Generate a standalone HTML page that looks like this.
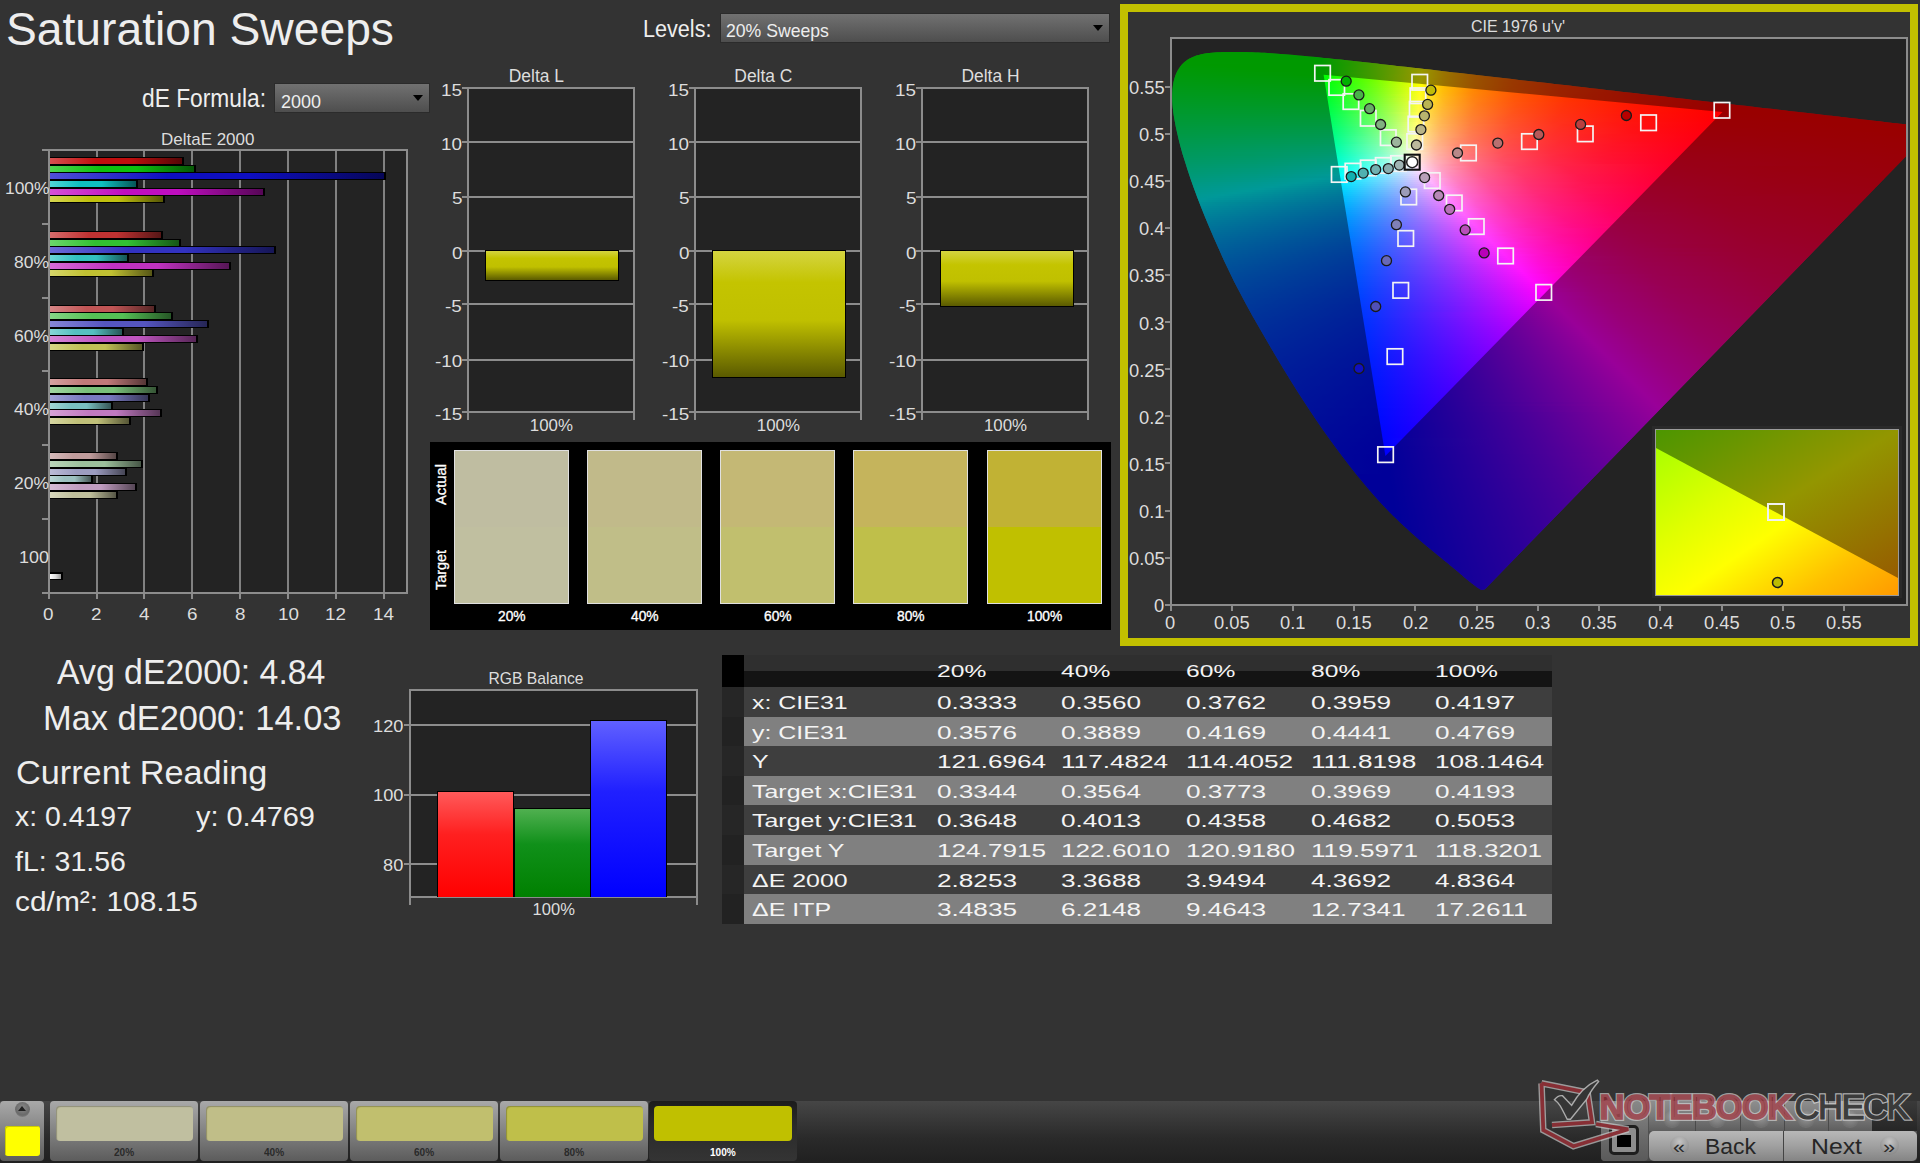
<!DOCTYPE html><html><head><meta charset="utf-8"><style>
*{margin:0;padding:0}
html,body{width:1920px;height:1163px;overflow:hidden;background:#333}
body{position:relative;font-family:"Liberation Sans",sans-serif}
div,i,b,span{position:absolute;display:block}
.t{white-space:pre;transform-origin:0 0}
#gam i{left:0;width:100%}
</style></head><body><div class="t" style="left:5.50px;top:6.80px;font-size:45.35px;line-height:45.35px;color:#eee;transform:scaleX(1.0193);">Saturation Sweeps</div>
<div class="t" style="left:141.60px;top:86.16px;font-size:25.44px;line-height:25.44px;color:#eee;transform:scaleX(0.8951);">dE Formula:</div>
<div style="left:275px;top:84px;width:154px;height:28px;background:linear-gradient(#717171,#4e4e4e);box-shadow:0 0 0 1px #2b2b2b"></div>
<div class="t" style="left:280.60px;top:92.18px;font-size:19.04px;line-height:19.04px;color:#eee;transform:scaleX(0.9443);">2000</div>
<div style="left:413px;top:95px;width:0;height:0;border-left:5px solid transparent;border-right:5px solid transparent;border-top:6px solid #000"></div>
<div class="t" style="left:642.50px;top:17.19px;font-size:23.98px;line-height:23.98px;color:#eee;transform:scaleX(0.9014);">Levels:</div>
<div style="left:721px;top:14px;width:388px;height:28px;background:linear-gradient(#717171,#4e4e4e);box-shadow:0 0 0 1px #2b2b2b"></div>
<div class="t" style="left:726.00px;top:21.38px;font-size:19.04px;line-height:19.04px;color:#eee;transform:scaleX(0.9267);">20% Sweeps</div>
<div style="left:1093px;top:25px;width:0;height:0;border-left:5px solid transparent;border-right:5px solid transparent;border-top:6px solid #000"></div>
<div class="t" style="left:160.85px;top:130.78px;font-size:17.15px;line-height:17.15px;color:#ddd;transform:scaleX(0.9905);">DeltaE 2000</div>
<div style="left:49px;top:150px;width:358px;height:443px;background:#232323"></div>
<div style="left:96px;top:150px;width:2px;height:443px;background:#8c8c8c;opacity:.9"></div>
<div style="left:143px;top:150px;width:2px;height:443px;background:#8c8c8c;opacity:.9"></div>
<div style="left:191px;top:150px;width:2px;height:443px;background:#8c8c8c;opacity:.9"></div>
<div style="left:239px;top:150px;width:2px;height:443px;background:#8c8c8c;opacity:.9"></div>
<div style="left:287px;top:150px;width:2px;height:443px;background:#8c8c8c;opacity:.9"></div>
<div style="left:335px;top:150px;width:2px;height:443px;background:#8c8c8c;opacity:.9"></div>
<div style="left:383px;top:150px;width:2px;height:443px;background:#8c8c8c;opacity:.9"></div>
<div style="left:48px;top:149px;width:360px;height:2px;background:#8c8c8c"></div>
<div style="left:406px;top:149px;width:2px;height:445px;background:#8c8c8c"></div>
<div style="left:48px;top:149px;width:2px;height:445px;background:#8c8c8c"></div>
<div style="left:48px;top:592px;width:360px;height:2px;background:#8c8c8c"></div>
<div style="left:42px;top:149px;width:7px;height:2px;background:#8c8c8c"></div>
<div style="left:42px;top:223px;width:7px;height:2px;background:#8c8c8c"></div>
<div style="left:42px;top:297px;width:7px;height:2px;background:#8c8c8c"></div>
<div style="left:42px;top:370px;width:7px;height:2px;background:#8c8c8c"></div>
<div style="left:42px;top:444px;width:7px;height:2px;background:#8c8c8c"></div>
<div style="left:42px;top:518px;width:7px;height:2px;background:#8c8c8c"></div>
<div style="left:42px;top:592px;width:7px;height:2px;background:#8c8c8c"></div>
<div style="left:48px;top:593px;width:2px;height:6px;background:#8c8c8c"></div>
<div class="t" style="left:43.45px;top:605.68px;font-size:17.15px;line-height:17.15px;color:#ddd;transform:scaleX(1.1000);">0</div>
<div style="left:96px;top:593px;width:2px;height:6px;background:#8c8c8c"></div>
<div class="t" style="left:91.31px;top:605.68px;font-size:17.15px;line-height:17.15px;color:#ddd;transform:scaleX(1.1000);">2</div>
<div style="left:143px;top:593px;width:2px;height:6px;background:#8c8c8c"></div>
<div class="t" style="left:139.17px;top:605.68px;font-size:17.15px;line-height:17.15px;color:#ddd;transform:scaleX(1.1000);">4</div>
<div style="left:191px;top:593px;width:2px;height:6px;background:#8c8c8c"></div>
<div class="t" style="left:187.03px;top:605.68px;font-size:17.15px;line-height:17.15px;color:#ddd;transform:scaleX(1.1000);">6</div>
<div style="left:239px;top:593px;width:2px;height:6px;background:#8c8c8c"></div>
<div class="t" style="left:234.89px;top:605.68px;font-size:17.15px;line-height:17.15px;color:#ddd;transform:scaleX(1.1000);">8</div>
<div style="left:287px;top:593px;width:2px;height:6px;background:#8c8c8c"></div>
<div class="t" style="left:277.51px;top:605.68px;font-size:17.15px;line-height:17.15px;color:#ddd;transform:scaleX(1.1000);">10</div>
<div style="left:335px;top:593px;width:2px;height:6px;background:#8c8c8c"></div>
<div class="t" style="left:325.37px;top:605.68px;font-size:17.15px;line-height:17.15px;color:#ddd;transform:scaleX(1.1000);">12</div>
<div style="left:383px;top:593px;width:2px;height:6px;background:#8c8c8c"></div>
<div class="t" style="left:373.23px;top:605.68px;font-size:17.15px;line-height:17.15px;color:#ddd;transform:scaleX(1.1000);">14</div>
<div class="t" style="left:4.50px;top:179.88px;font-size:17.15px;line-height:17.15px;color:#ddd;transform:scaleX(1.0144);">100%</div>
<div class="t" style="left:14.00px;top:253.71px;font-size:17.15px;line-height:17.15px;color:#ddd;transform:scaleX(1.0196);">80%</div>
<div class="t" style="left:14.00px;top:327.54px;font-size:17.15px;line-height:17.15px;color:#ddd;transform:scaleX(1.0196);">60%</div>
<div class="t" style="left:14.00px;top:401.37px;font-size:17.15px;line-height:17.15px;color:#ddd;transform:scaleX(1.0196);">40%</div>
<div class="t" style="left:14.00px;top:475.20px;font-size:17.15px;line-height:17.15px;color:#ddd;transform:scaleX(1.0196);">20%</div>
<div class="t" style="left:19.00px;top:549.03px;font-size:17.15px;line-height:17.15px;color:#ddd;transform:scaleX(1.0483);">100</div>
<div style="left:50px;top:157px;width:134px;height:8px;background:#000"></div>
<div style="left:50px;top:158px;width:132px;height:6px;background:linear-gradient(90deg,rgb(214,80,80),rgb(192,14,14) 35%,rgb(192,14,14) 60%,rgb(86,6,6))"></div>
<div style="left:50px;top:165px;width:146px;height:8px;background:#000"></div>
<div style="left:50px;top:166px;width:144px;height:6px;background:linear-gradient(90deg,rgb(80,214,80),rgb(14,192,14) 35%,rgb(14,192,14) 60%,rgb(6,86,6))"></div>
<div style="left:50px;top:172px;width:336px;height:8px;background:#000"></div>
<div style="left:50px;top:173px;width:334px;height:6px;background:linear-gradient(90deg,rgb(80,80,214),rgb(14,14,192) 35%,rgb(14,14,192) 60%,rgb(6,6,86))"></div>
<div style="left:50px;top:180px;width:88px;height:8px;background:#000"></div>
<div style="left:50px;top:181px;width:86px;height:6px;background:linear-gradient(90deg,rgb(80,214,214),rgb(14,192,192) 35%,rgb(14,192,192) 60%,rgb(6,86,86))"></div>
<div style="left:50px;top:188px;width:215px;height:8px;background:#000"></div>
<div style="left:50px;top:189px;width:213px;height:6px;background:linear-gradient(90deg,rgb(214,80,214),rgb(192,14,192) 35%,rgb(192,14,192) 60%,rgb(86,6,86))"></div>
<div style="left:50px;top:195px;width:115px;height:8px;background:#000"></div>
<div style="left:50px;top:196px;width:113px;height:6px;background:linear-gradient(90deg,rgb(214,214,80),rgb(192,192,14) 35%,rgb(192,192,14) 60%,rgb(86,86,6))"></div>
<div style="left:50px;top:231px;width:113px;height:8px;background:#000"></div>
<div style="left:50px;top:232px;width:111px;height:6px;background:linear-gradient(90deg,rgb(214,107,107),rgb(192,50,50) 35%,rgb(192,50,50) 60%,rgb(86,22,22))"></div>
<div style="left:50px;top:239px;width:131px;height:8px;background:#000"></div>
<div style="left:50px;top:240px;width:129px;height:6px;background:linear-gradient(90deg,rgb(107,214,107),rgb(50,192,50) 35%,rgb(50,192,50) 60%,rgb(22,86,22))"></div>
<div style="left:50px;top:246px;width:226px;height:8px;background:#000"></div>
<div style="left:50px;top:247px;width:224px;height:6px;background:linear-gradient(90deg,rgb(107,107,214),rgb(50,50,192) 35%,rgb(50,50,192) 60%,rgb(22,22,86))"></div>
<div style="left:50px;top:254px;width:79px;height:8px;background:#000"></div>
<div style="left:50px;top:255px;width:77px;height:6px;background:linear-gradient(90deg,rgb(107,214,214),rgb(50,192,192) 35%,rgb(50,192,192) 60%,rgb(22,86,86))"></div>
<div style="left:50px;top:262px;width:181px;height:8px;background:#000"></div>
<div style="left:50px;top:263px;width:179px;height:6px;background:linear-gradient(90deg,rgb(214,107,214),rgb(192,50,192) 35%,rgb(192,50,192) 60%,rgb(86,22,86))"></div>
<div style="left:50px;top:269px;width:104px;height:8px;background:#000"></div>
<div style="left:50px;top:270px;width:102px;height:6px;background:linear-gradient(90deg,rgb(214,214,107),rgb(192,192,50) 35%,rgb(192,192,50) 60%,rgb(86,86,22))"></div>
<div style="left:50px;top:305px;width:106px;height:8px;background:#000"></div>
<div style="left:50px;top:306px;width:104px;height:6px;background:linear-gradient(90deg,rgb(214,134,134),rgb(192,85,85) 35%,rgb(192,85,85) 60%,rgb(86,38,38))"></div>
<div style="left:50px;top:312px;width:123px;height:8px;background:#000"></div>
<div style="left:50px;top:313px;width:121px;height:6px;background:linear-gradient(90deg,rgb(134,214,134),rgb(85,192,85) 35%,rgb(85,192,85) 60%,rgb(38,86,38))"></div>
<div style="left:50px;top:320px;width:159px;height:8px;background:#000"></div>
<div style="left:50px;top:321px;width:157px;height:6px;background:linear-gradient(90deg,rgb(134,134,214),rgb(85,85,192) 35%,rgb(85,85,192) 60%,rgb(38,38,86))"></div>
<div style="left:50px;top:328px;width:74px;height:8px;background:#000"></div>
<div style="left:50px;top:329px;width:72px;height:6px;background:linear-gradient(90deg,rgb(134,214,214),rgb(85,192,192) 35%,rgb(85,192,192) 60%,rgb(38,86,86))"></div>
<div style="left:50px;top:335px;width:148px;height:8px;background:#000"></div>
<div style="left:50px;top:336px;width:146px;height:6px;background:linear-gradient(90deg,rgb(214,134,214),rgb(192,85,192) 35%,rgb(192,85,192) 60%,rgb(86,38,86))"></div>
<div style="left:50px;top:343px;width:94px;height:8px;background:#000"></div>
<div style="left:50px;top:344px;width:92px;height:6px;background:linear-gradient(90deg,rgb(214,214,134),rgb(192,192,85) 35%,rgb(192,192,85) 60%,rgb(86,86,38))"></div>
<div style="left:50px;top:378px;width:98px;height:8px;background:#000"></div>
<div style="left:50px;top:379px;width:96px;height:6px;background:linear-gradient(90deg,rgb(214,161,161),rgb(192,121,121) 35%,rgb(192,121,121) 60%,rgb(86,54,54))"></div>
<div style="left:50px;top:386px;width:108px;height:8px;background:#000"></div>
<div style="left:50px;top:387px;width:106px;height:6px;background:linear-gradient(90deg,rgb(161,214,161),rgb(121,192,121) 35%,rgb(121,192,121) 60%,rgb(54,86,54))"></div>
<div style="left:50px;top:394px;width:100px;height:8px;background:#000"></div>
<div style="left:50px;top:395px;width:98px;height:6px;background:linear-gradient(90deg,rgb(161,161,214),rgb(121,121,192) 35%,rgb(121,121,192) 60%,rgb(54,54,86))"></div>
<div style="left:50px;top:402px;width:63px;height:8px;background:#000"></div>
<div style="left:50px;top:403px;width:61px;height:6px;background:linear-gradient(90deg,rgb(161,214,214),rgb(121,192,192) 35%,rgb(121,192,192) 60%,rgb(54,86,86))"></div>
<div style="left:50px;top:409px;width:112px;height:8px;background:#000"></div>
<div style="left:50px;top:410px;width:110px;height:6px;background:linear-gradient(90deg,rgb(214,161,214),rgb(192,121,192) 35%,rgb(192,121,192) 60%,rgb(86,54,86))"></div>
<div style="left:50px;top:417px;width:81px;height:8px;background:#000"></div>
<div style="left:50px;top:418px;width:79px;height:6px;background:linear-gradient(90deg,rgb(214,214,161),rgb(192,192,121) 35%,rgb(192,192,121) 60%,rgb(86,86,54))"></div>
<div style="left:50px;top:452px;width:68px;height:8px;background:#000"></div>
<div style="left:50px;top:453px;width:66px;height:6px;background:linear-gradient(90deg,rgb(214,187,187),rgb(192,156,156) 35%,rgb(192,156,156) 60%,rgb(86,70,70))"></div>
<div style="left:50px;top:460px;width:93px;height:8px;background:#000"></div>
<div style="left:50px;top:461px;width:91px;height:6px;background:linear-gradient(90deg,rgb(187,214,187),rgb(156,192,156) 35%,rgb(156,192,156) 60%,rgb(70,86,70))"></div>
<div style="left:50px;top:468px;width:77px;height:8px;background:#000"></div>
<div style="left:50px;top:469px;width:75px;height:6px;background:linear-gradient(90deg,rgb(187,187,214),rgb(156,156,192) 35%,rgb(156,156,192) 60%,rgb(70,70,86))"></div>
<div style="left:50px;top:475px;width:43px;height:8px;background:#000"></div>
<div style="left:50px;top:476px;width:41px;height:6px;background:linear-gradient(90deg,rgb(187,214,214),rgb(156,192,192) 35%,rgb(156,192,192) 60%,rgb(70,86,86))"></div>
<div style="left:50px;top:483px;width:87px;height:8px;background:#000"></div>
<div style="left:50px;top:484px;width:85px;height:6px;background:linear-gradient(90deg,rgb(214,187,214),rgb(192,156,192) 35%,rgb(192,156,192) 60%,rgb(86,70,86))"></div>
<div style="left:50px;top:491px;width:68px;height:8px;background:#000"></div>
<div style="left:50px;top:492px;width:66px;height:6px;background:linear-gradient(90deg,rgb(214,214,187),rgb(192,192,156) 35%,rgb(192,192,156) 60%,rgb(86,86,70))"></div>
<div style="left:50px;top:572px;width:13px;height:8px;background:#000"></div>
<div style="left:50px;top:573.5px;width:11px;height:5px;background:linear-gradient(90deg,#fff,#ddd 50%,#999)"></div>
<div class="t" style="left:508.77px;top:68.23px;font-size:17.44px;line-height:17.44px;color:#ddd;">Delta L</div>
<div style="left:468px;top:88px;width:166px;height:324px;background:#232323"></div>
<div style="left:468px;top:87px;width:167px;height:2px;background:#8c8c8c"></div>
<div style="left:462px;top:87px;width:6px;height:2px;background:#8c8c8c"></div>
<div class="t" style="left:441.11px;top:81.88px;font-size:17.15px;line-height:17.15px;color:#ddd;transform:scaleX(1.1000);">15</div>
<div style="left:468px;top:141px;width:167px;height:2px;background:#8c8c8c"></div>
<div style="left:462px;top:141px;width:6px;height:2px;background:#8c8c8c"></div>
<div class="t" style="left:441.11px;top:135.58px;font-size:17.15px;line-height:17.15px;color:#ddd;transform:scaleX(1.1000);">10</div>
<div style="left:468px;top:196px;width:167px;height:2px;background:#8c8c8c"></div>
<div style="left:462px;top:196px;width:6px;height:2px;background:#8c8c8c"></div>
<div class="t" style="left:451.61px;top:190.38px;font-size:17.15px;line-height:17.15px;color:#ddd;transform:scaleX(1.1000);">5</div>
<div style="left:468px;top:250px;width:167px;height:2px;background:#8c8c8c"></div>
<div style="left:462px;top:250px;width:6px;height:2px;background:#8c8c8c"></div>
<div class="t" style="left:451.61px;top:244.58px;font-size:17.15px;line-height:17.15px;color:#ddd;transform:scaleX(1.1000);">0</div>
<div style="left:468px;top:303px;width:167px;height:2px;background:#8c8c8c"></div>
<div style="left:462px;top:303px;width:6px;height:2px;background:#8c8c8c"></div>
<div class="t" style="left:445.32px;top:297.78px;font-size:17.15px;line-height:17.15px;color:#ddd;transform:scaleX(1.1000);">-5</div>
<div style="left:468px;top:359px;width:167px;height:2px;background:#8c8c8c"></div>
<div style="left:462px;top:359px;width:6px;height:2px;background:#8c8c8c"></div>
<div class="t" style="left:434.83px;top:353.28px;font-size:17.15px;line-height:17.15px;color:#ddd;transform:scaleX(1.1000);">-10</div>
<div style="left:468px;top:411px;width:167px;height:2px;background:#8c8c8c"></div>
<div style="left:462px;top:411px;width:6px;height:2px;background:#8c8c8c"></div>
<div class="t" style="left:434.83px;top:405.68px;font-size:17.15px;line-height:17.15px;color:#ddd;transform:scaleX(1.1000);">-15</div>
<div style="left:467px;top:88px;width:2px;height:332px;background:#8c8c8c"></div>
<div style="left:633px;top:88px;width:2px;height:332px;background:#8c8c8c"></div>
<div class="t" style="left:529.84px;top:418.22px;font-size:16.86px;line-height:16.86px;color:#ddd;">100%</div>
<div style="left:485px;top:250px;width:134px;height:31px;background:#000"></div>
<div style="left:486px;top:251px;width:132px;height:29px;background:linear-gradient(#d4d440,#c4c400 25%,#c0c000 55%,#5a5a00)"></div>
<div class="t" style="left:734.32px;top:68.23px;font-size:17.44px;line-height:17.44px;color:#ddd;">Delta C</div>
<div style="left:695px;top:88px;width:166px;height:324px;background:#232323"></div>
<div style="left:695px;top:87px;width:167px;height:2px;background:#8c8c8c"></div>
<div style="left:689px;top:87px;width:6px;height:2px;background:#8c8c8c"></div>
<div class="t" style="left:668.11px;top:81.88px;font-size:17.15px;line-height:17.15px;color:#ddd;transform:scaleX(1.1000);">15</div>
<div style="left:695px;top:141px;width:167px;height:2px;background:#8c8c8c"></div>
<div style="left:689px;top:141px;width:6px;height:2px;background:#8c8c8c"></div>
<div class="t" style="left:668.11px;top:135.58px;font-size:17.15px;line-height:17.15px;color:#ddd;transform:scaleX(1.1000);">10</div>
<div style="left:695px;top:196px;width:167px;height:2px;background:#8c8c8c"></div>
<div style="left:689px;top:196px;width:6px;height:2px;background:#8c8c8c"></div>
<div class="t" style="left:678.61px;top:190.38px;font-size:17.15px;line-height:17.15px;color:#ddd;transform:scaleX(1.1000);">5</div>
<div style="left:695px;top:250px;width:167px;height:2px;background:#8c8c8c"></div>
<div style="left:689px;top:250px;width:6px;height:2px;background:#8c8c8c"></div>
<div class="t" style="left:678.61px;top:244.58px;font-size:17.15px;line-height:17.15px;color:#ddd;transform:scaleX(1.1000);">0</div>
<div style="left:695px;top:303px;width:167px;height:2px;background:#8c8c8c"></div>
<div style="left:689px;top:303px;width:6px;height:2px;background:#8c8c8c"></div>
<div class="t" style="left:672.32px;top:297.78px;font-size:17.15px;line-height:17.15px;color:#ddd;transform:scaleX(1.1000);">-5</div>
<div style="left:695px;top:359px;width:167px;height:2px;background:#8c8c8c"></div>
<div style="left:689px;top:359px;width:6px;height:2px;background:#8c8c8c"></div>
<div class="t" style="left:661.83px;top:353.28px;font-size:17.15px;line-height:17.15px;color:#ddd;transform:scaleX(1.1000);">-10</div>
<div style="left:695px;top:411px;width:167px;height:2px;background:#8c8c8c"></div>
<div style="left:689px;top:411px;width:6px;height:2px;background:#8c8c8c"></div>
<div class="t" style="left:661.83px;top:405.68px;font-size:17.15px;line-height:17.15px;color:#ddd;transform:scaleX(1.1000);">-15</div>
<div style="left:694px;top:88px;width:2px;height:332px;background:#8c8c8c"></div>
<div style="left:860px;top:88px;width:2px;height:332px;background:#8c8c8c"></div>
<div class="t" style="left:756.84px;top:418.22px;font-size:16.86px;line-height:16.86px;color:#ddd;">100%</div>
<div style="left:712px;top:250px;width:134px;height:128px;background:#000"></div>
<div style="left:713px;top:251px;width:132px;height:126px;background:linear-gradient(#d4d440,#c4c400 25%,#c0c000 55%,#5a5a00)"></div>
<div class="t" style="left:961.42px;top:68.23px;font-size:17.44px;line-height:17.44px;color:#ddd;">Delta H</div>
<div style="left:922px;top:88px;width:166px;height:324px;background:#232323"></div>
<div style="left:922px;top:87px;width:167px;height:2px;background:#8c8c8c"></div>
<div style="left:916px;top:87px;width:6px;height:2px;background:#8c8c8c"></div>
<div class="t" style="left:895.21px;top:81.88px;font-size:17.15px;line-height:17.15px;color:#ddd;transform:scaleX(1.1000);">15</div>
<div style="left:922px;top:141px;width:167px;height:2px;background:#8c8c8c"></div>
<div style="left:916px;top:141px;width:6px;height:2px;background:#8c8c8c"></div>
<div class="t" style="left:895.21px;top:135.58px;font-size:17.15px;line-height:17.15px;color:#ddd;transform:scaleX(1.1000);">10</div>
<div style="left:922px;top:196px;width:167px;height:2px;background:#8c8c8c"></div>
<div style="left:916px;top:196px;width:6px;height:2px;background:#8c8c8c"></div>
<div class="t" style="left:905.71px;top:190.38px;font-size:17.15px;line-height:17.15px;color:#ddd;transform:scaleX(1.1000);">5</div>
<div style="left:922px;top:250px;width:167px;height:2px;background:#8c8c8c"></div>
<div style="left:916px;top:250px;width:6px;height:2px;background:#8c8c8c"></div>
<div class="t" style="left:905.71px;top:244.58px;font-size:17.15px;line-height:17.15px;color:#ddd;transform:scaleX(1.1000);">0</div>
<div style="left:922px;top:303px;width:167px;height:2px;background:#8c8c8c"></div>
<div style="left:916px;top:303px;width:6px;height:2px;background:#8c8c8c"></div>
<div class="t" style="left:899.42px;top:297.78px;font-size:17.15px;line-height:17.15px;color:#ddd;transform:scaleX(1.1000);">-5</div>
<div style="left:922px;top:359px;width:167px;height:2px;background:#8c8c8c"></div>
<div style="left:916px;top:359px;width:6px;height:2px;background:#8c8c8c"></div>
<div class="t" style="left:888.93px;top:353.28px;font-size:17.15px;line-height:17.15px;color:#ddd;transform:scaleX(1.1000);">-10</div>
<div style="left:922px;top:411px;width:167px;height:2px;background:#8c8c8c"></div>
<div style="left:916px;top:411px;width:6px;height:2px;background:#8c8c8c"></div>
<div class="t" style="left:888.93px;top:405.68px;font-size:17.15px;line-height:17.15px;color:#ddd;transform:scaleX(1.1000);">-15</div>
<div style="left:921px;top:88px;width:2px;height:332px;background:#8c8c8c"></div>
<div style="left:1087px;top:88px;width:2px;height:332px;background:#8c8c8c"></div>
<div class="t" style="left:983.94px;top:418.22px;font-size:16.86px;line-height:16.86px;color:#ddd;">100%</div>
<div style="left:940px;top:250px;width:134px;height:57px;background:#000"></div>
<div style="left:941px;top:251px;width:132px;height:55px;background:linear-gradient(#d4d440,#c4c400 25%,#c0c000 55%,#5a5a00)"></div>
<div style="left:430px;top:442px;width:681px;height:188px;background:#000"></div>
<div style="left:454px;top:450px;width:115px;height:154px;box-sizing:border-box;border:1px solid #e0e0e0;background:linear-gradient(rgb(191, 189, 161) 50%,rgb(192, 191, 160) 50%)"></div>
<div class="t" style="left:497.68px;top:609.49px;font-size:14.53px;line-height:14.53px;color:#fff;transform:scaleX(0.9500);-webkit-text-stroke:0.35px #fff;">20%</div>
<div style="left:587px;top:450px;width:115px;height:154px;box-sizing:border-box;border:1px solid #e0e0e0;background:linear-gradient(rgb(193, 186, 138) 50%,rgb(192, 190, 136) 50%)"></div>
<div class="t" style="left:630.68px;top:609.49px;font-size:14.53px;line-height:14.53px;color:#fff;transform:scaleX(0.9500);-webkit-text-stroke:0.35px #fff;">40%</div>
<div style="left:720px;top:450px;width:115px;height:154px;box-sizing:border-box;border:1px solid #e0e0e0;background:linear-gradient(rgb(196, 184, 117) 50%,rgb(193, 191, 110) 50%)"></div>
<div class="t" style="left:763.68px;top:609.49px;font-size:14.53px;line-height:14.53px;color:#fff;transform:scaleX(0.9500);-webkit-text-stroke:0.35px #fff;">60%</div>
<div style="left:853px;top:450px;width:115px;height:154px;box-sizing:border-box;border:1px solid #e0e0e0;background:linear-gradient(rgb(197, 180, 92) 50%,rgb(191, 191, 74) 50%)"></div>
<div class="t" style="left:896.68px;top:609.49px;font-size:14.53px;line-height:14.53px;color:#fff;transform:scaleX(0.9500);-webkit-text-stroke:0.35px #fff;">80%</div>
<div style="left:987px;top:450px;width:115px;height:154px;box-sizing:border-box;border:1px solid #e0e0e0;background:linear-gradient(rgb(193, 178, 52) 50%,rgb(192, 192, 0) 50%)"></div>
<div class="t" style="left:1026.84px;top:609.49px;font-size:14.53px;line-height:14.53px;color:#fff;transform:scaleX(0.9500);-webkit-text-stroke:0.35px #fff;">100%</div>
<div class="t" style="left:433.95px;top:505.00px;font-size:14.83px;line-height:14.83px;color:#fff;transform:rotate(-90deg) scaleX(0.9950);-webkit-text-stroke:0.3px #fff">Actual</div>
<div class="t" style="left:433.95px;top:590.00px;font-size:14.83px;line-height:14.83px;color:#fff;transform:rotate(-90deg) scaleX(0.9707);-webkit-text-stroke:0.3px #fff">Target</div>
<div style="left:1120px;top:4px;width:798px;height:642px;box-sizing:border-box;border:8px solid #c2c000"></div>
<div class="t" style="left:1470.95px;top:18.96px;font-size:15.99px;line-height:15.99px;color:#ddd;">CIE 1976 u'v'</div>
<div style="left:1170px;top:37px;width:737px;height:568px;background:#232323"></div>
<div id="gam" style="left:1171px;top:38px;width:735px;height:566px;overflow:hidden;clip-path:polygon(314.0px 551.2px,314.0px 551.2px,314.0px 551.2px,313.9px 551.1px,313.9px 551.1px,313.8px 551.1px,313.8px 551.2px,313.8px 551.2px,313.7px 551.3px,313.7px 551.3px,313.6px 551.4px,313.6px 551.4px,313.5px 551.5px,313.5px 551.5px,313.4px 551.5px,313.3px 551.5px,313.3px 551.5px,313.2px 551.5px,313.1px 551.5px,313.1px 551.5px,313.0px 551.6px,312.9px 551.6px,312.8px 551.7px,312.7px 551.7px,312.7px 551.8px,312.6px 551.8px,312.5px 551.8px,312.4px 551.8px,312.3px 551.8px,312.2px 551.8px,312.0px 551.8px,311.9px 551.8px,311.8px 551.8px,311.7px 551.8px,311.5px 551.8px,311.4px 551.8px,311.2px 551.8px,311.1px 551.8px,310.9px 551.8px,310.8px 551.9px,310.6px 551.9px,310.4px 551.9px,310.2px 551.8px,310.0px 551.7px,309.7px 551.6px,309.4px 551.5px,309.1px 551.3px,308.8px 551.1px,308.4px 550.9px,307.9px 550.6px,307.5px 550.3px,306.9px 550.0px,306.4px 549.6px,305.8px 549.2px,305.2px 548.8px,304.6px 548.3px,303.9px 547.8px,303.3px 547.3px,302.5px 546.8px,301.8px 546.1px,300.9px 545.5px,300.0px 544.8px,299.1px 544.0px,298.0px 543.2px,297.0px 542.3px,295.9px 541.4px,294.7px 540.5px,293.5px 539.5px,292.3px 538.4px,291.1px 537.3px,289.7px 536.2px,288.4px 535.0px,286.9px 533.8px,285.4px 532.6px,283.9px 531.3px,282.3px 530.0px,280.6px 528.6px,278.9px 527.2px,277.1px 525.6px,275.1px 524.0px,273.1px 522.4px,270.9px 520.6px,268.7px 518.8px,266.5px 517.0px,264.1px 515.0px,261.7px 513.0px,259.2px 511.0px,256.7px 508.9px,254.1px 506.7px,251.4px 504.4px,248.5px 502.0px,245.6px 499.4px,242.6px 496.8px,239.4px 494.0px,236.2px 491.1px,232.9px 488.0px,229.4px 484.7px,225.9px 481.3px,222.3px 477.9px,218.6px 474.2px,214.8px 470.3px,210.7px 466.1px,206.4px 461.3px,201.8px 456.1px,197.0px 450.6px,192.0px 444.6px,186.8px 438.3px,181.4px 431.6px,176.0px 424.5px,170.3px 417.1px,164.5px 409.2px,158.5px 401.0px,152.4px 392.4px,146.2px 383.5px,140.0px 374.2px,133.6px 364.6px,127.1px 354.5px,120.5px 344.0px,113.9px 333.3px,107.4px 322.5px,100.9px 311.6px,94.5px 300.6px,88.0px 289.3px,81.5px 277.9px,75.2px 266.5px,69.1px 255.1px,63.3px 243.9px,57.9px 232.8px,52.6px 221.7px,47.6px 210.6px,42.8px 199.7px,38.2px 189.1px,34.0px 178.9px,30.0px 169.0px,26.3px 159.4px,22.8px 150.0px,19.6px 141.0px,16.7px 132.3px,14.1px 124.1px,11.7px 116.4px,9.6px 109.0px,7.8px 102.1px,6.3px 95.5px,4.9px 89.3px,3.8px 83.4px,2.8px 77.8px,2.1px 72.7px,1.6px 67.9px,1.3px 63.4px,1.2px 59.1px,1.3px 55.0px,1.5px 51.2px,1.9px 47.6px,2.5px 44.3px,3.2px 41.2px,4.1px 38.3px,5.2px 35.5px,6.4px 33.0px,7.8px 30.7px,9.3px 28.5px,10.9px 26.6px,12.7px 24.8px,14.5px 23.2px,16.5px 21.7px,18.6px 20.5px,20.8px 19.4px,23.1px 18.5px,25.4px 17.6px,27.8px 16.9px,30.3px 16.2px,32.8px 15.7px,35.5px 15.3px,38.1px 15.0px,40.9px 14.8px,43.6px 14.5px,46.4px 14.3px,49.2px 14.2px,52.1px 14.1px,55.0px 14.0px,57.9px 14.0px,60.8px 14.0px,63.7px 13.9px,66.6px 14.0px,69.5px 14.0px,72.4px 14.0px,75.3px 14.1px,78.3px 14.2px,81.3px 14.3px,84.3px 14.4px,87.3px 14.5px,90.3px 14.7px,93.4px 14.8px,96.5px 15.0px,99.7px 15.2px,102.9px 15.4px,106.2px 15.7px,109.4px 15.9px,112.8px 16.2px,116.2px 16.4px,119.6px 16.7px,123.1px 17.0px,126.6px 17.4px,130.2px 17.7px,133.8px 18.0px,137.5px 18.4px,141.3px 18.7px,145.1px 19.1px,149.0px 19.5px,152.9px 19.9px,156.9px 20.3px,161.0px 20.7px,165.1px 21.2px,169.4px 21.6px,173.7px 22.1px,178.0px 22.6px,182.5px 23.0px,187.0px 23.5px,191.6px 24.0px,196.3px 24.6px,201.0px 25.1px,205.8px 25.6px,210.8px 26.2px,215.8px 26.7px,220.9px 27.3px,226.0px 27.9px,231.3px 28.5px,236.7px 29.1px,242.1px 29.7px,247.6px 30.3px,253.2px 31.0px,258.9px 31.6px,264.7px 32.3px,270.6px 33.0px,276.6px 33.7px,282.6px 34.4px,288.8px 35.1px,295.0px 35.8px,301.3px 36.5px,307.7px 37.2px,314.2px 38.0px,320.8px 38.8px,327.5px 39.5px,334.2px 40.3px,341.0px 41.1px,347.9px 41.9px,354.9px 42.7px,362.0px 43.5px,369.1px 44.3px,376.3px 45.1px,383.5px 46.0px,390.8px 46.8px,398.2px 47.6px,405.5px 48.5px,412.9px 49.3px,420.4px 50.2px,427.9px 51.1px,435.4px 51.9px,442.9px 52.8px,450.3px 53.7px,457.6px 54.5px,464.9px 55.3px,472.1px 56.2px,479.3px 57.0px,486.5px 57.8px,493.6px 58.6px,500.8px 59.5px,507.9px 60.3px,515.1px 61.1px,522.1px 61.9px,529.1px 62.7px,535.8px 63.5px,542.5px 64.2px,549.1px 65.0px,555.5px 65.7px,561.8px 66.4px,568.0px 67.2px,574.1px 67.8px,580.0px 68.5px,585.9px 69.2px,591.6px 69.9px,597.2px 70.5px,602.6px 71.1px,607.9px 71.8px,613.0px 72.3px,618.0px 72.9px,622.9px 73.5px,627.6px 74.0px,632.2px 74.6px,636.7px 75.1px,641.0px 75.6px,645.2px 76.0px,649.2px 76.5px,653.2px 77.0px,657.0px 77.4px,660.7px 77.8px,664.2px 78.2px,667.3px 78.6px,670.4px 78.9px,673.5px 79.3px,677.0px 79.7px,681.0px 80.2px,685.9px 80.7px,691.4px 81.4px,697.2px 82.0px,703.1px 82.7px,708.6px 83.3px,713.5px 83.9px,717.9px 84.4px,721.8px 84.9px,725.5px 85.3px,728.9px 85.7px,732.0px 86.0px,734.9px 86.3px,737.6px 86.7px,739.9px 86.9px,741.9px 87.2px,743.8px 87.4px,745.7px 87.6px,747.6px 87.8px,749.7px 88.0px,751.7px 88.3px,753.7px 88.5px,755.6px 88.7px,757.3px 88.9px,758.7px 89.1px,759.8px 89.2px,760.8px 89.3px,761.5px 89.4px,762.1px 89.5px,762.6px 89.5px,763.0px 89.6px)"><i style="top:12px;height:2px;background:linear-gradient(90deg,#00ff00 0px,#01ff00 149.5px,#6fff00 200.5px,#b5ff00 227.5px,#ffff00 252.5px,#ffc700 273.5px,#ff9200 303.5px,#ff6300 345.5px,#ff4000 395.5px,#ff1c00 482.5px,#ff0500 579.5px,#ff0000 608.5px,#ff0000 735px)"></i><i style="top:14px;height:2px;background:linear-gradient(90deg,#00ff00 0px,#01ff00 149.5px,#3cff00 178.5px,#7bff00 205.5px,#fffe00 252.5px,#ffc400 274.5px,#ff9000 304.5px,#ff6600 341.5px,#ff4000 394.5px,#ff2000 468.5px,#ff0600 572.5px,#ff0000 607.5px,#ff0000 735px)"></i><i style="top:16px;height:2px;background:linear-gradient(90deg,#00ff00 0px,#00ff00 149.5px,#71ff00 201.5px,#b8ff00 228.5px,#fffd00 252.5px,#ffca00 271.5px,#ffaa00 287.5px,#ff8600 311.5px,#ff6100 346.5px,#ff3f00 395.5px,#ff1d00 476.5px,#ff0600 570.5px,#ff0000 605.5px,#ff0000 735px)"></i><i style="top:18px;height:2px;background:linear-gradient(90deg,#00ff00 0px,#00ff00 149.5px,#6cff00 199.5px,#adff00 224.5px,#fffd00 252.5px,#ffc500 273.5px,#ff8c00 306.5px,#ff6400 342.5px,#ff3f00 394.5px,#ff1c00 478.5px,#ff0400 579.5px,#ff0000 735px)"></i><i style="top:20px;height:2px;background:linear-gradient(90deg,#00ff00 0px,#01ff00 150.5px,#3dff00 179.5px,#85ff00 209.5px,#ffff00 251.5px,#ffc000 275.5px,#ff8e00 304.5px,#ff5f00 347.5px,#ff3e00 395.5px,#ff1b00 480.5px,#ff0500 572.5px,#ff0000 601.5px,#ff0000 735px)"></i><i style="top:22px;height:2px;background:linear-gradient(90deg,#00ff01 0px,#00ff00 150.5px,#78ff00 204.5px,#b3ff00 226.5px,#ffff00 251.5px,#ffc600 272.5px,#ff8c00 305.5px,#ff6100 344.5px,#ff3e00 394.5px,#ff1e00 469.5px,#ff0500 570.5px,#ff0000 599.5px,#ff0000 735px)"></i><i style="top:24px;height:2px;background:linear-gradient(90deg,#00ff03 0px,#00ff00 150.5px,#3aff00 178.5px,#7dff00 206.5px,#fffe00 251.5px,#ffc300 273.5px,#ff8a00 306.5px,#ff5d00 348.5px,#ff3e00 393.5px,#ff1c00 474.5px,#ff0300 579.5px,#ff0000 735px)"></i><i style="top:26px;height:2px;background:linear-gradient(90deg,#00ff06 0px,#00ff00 44.5px,#01ff00 151.5px,#3eff00 180.5px,#7dff00 206.5px,#fffd00 251.5px,#ffbe00 275.5px,#ff8800 307.5px,#ff5f00 345.5px,#ff3d00 394.5px,#ff1b00 476.5px,#ff0200 583.5px,#ff0000 735px)"></i><i style="top:28px;height:2px;background:linear-gradient(90deg,#00ff09 0px,#00ff00 66.5px,#00ff00 151.5px,#70ff00 201.5px,#fffd00 251.5px,#ffc400 272.5px,#ff8600 308.5px,#ff6100 342.5px,#ff3d00 393.5px,#ff1900 481.5px,#ff0200 581.5px,#ff0000 735px)"></i><i style="top:30px;height:2px;background:linear-gradient(90deg,#00ff0c 0px,#00ff00 87.5px,#00ff00 151.5px,#75ff00 203.5px,#fffc00 251.5px,#ffc100 273.5px,#ff8b00 304.5px,#ff5d00 346.5px,#ff3c00 394.5px,#ff1c00 470.5px,#ff0200 579.5px,#ff0000 735px)"></i><i style="top:32px;height:2px;background:linear-gradient(90deg,#00ff0f 0px,#00ff00 109.5px,#01ff00 152.5px,#36ff00 177.5px,#7aff00 205.5px,#aeff00 224.5px,#ffff00 250.5px,#ffbc00 275.5px,#ff8d00 302.5px,#ff5f00 343.5px,#ff3c00 393.5px,#ff1a00 475.5px,#ff0100 583.5px,#ff0000 735px)"></i><i style="top:34px;height:2px;background:linear-gradient(90deg,#00ff11 0px,#00ff00 152.5px,#7aff00 205.5px,#b4ff00 226.5px,#fffe00 250.5px,#ffc200 272.5px,#ff8b00 303.5px,#ff6200 339.5px,#ff3c00 392.5px,#ff1900 477.5px,#ff0100 581.5px,#ff0000 735px)"></i><i style="top:36px;height:2px;background:linear-gradient(90deg,#00ff14 0px,#00ff00 152.5px,#3cff00 180.5px,#7fff00 207.5px,#fffe00 250.5px,#ffbf00 273.5px,#ff8900 304.5px,#ff5c00 345.5px,#ff3b00 393.5px,#ff1c00 466.5px,#ff0100 579.5px,#ff0000 735px)"></i><i style="top:38px;height:2px;background:linear-gradient(90deg,#00ff17 0px,#01ff04 153.5px,#77ff00 204.5px,#fffd00 250.5px,#ffba00 275.5px,#ff8b00 302.5px,#ff5f00 341.5px,#ff3b00 392.5px,#ff1a00 471.5px,#ff0100 577.5px,#ff0000 735px)"></i><i style="top:40px;height:2px;background:linear-gradient(90deg,#00ff1a 0px,#00ff08 153.5px,#6fff00 201.5px,#fffc00 250.5px,#ffc200 271.5px,#ff8900 303.5px,#ff5a00 346.5px,#ff3b00 391.5px,#ff1800 476.5px,#ff0000 581.5px,#ff0000 735px)"></i><i style="top:42px;height:2px;background:linear-gradient(90deg,#00ff1d 0px,#00ff0c 153.5px,#67ff04 198.5px,#a6ff00 221.5px,#ffff00 249.5px,#ffbd00 273.5px,#ff8700 304.5px,#ff5c00 343.5px,#ff3a00 392.5px,#ff1700 478.5px,#ff0000 579.5px,#ff0000 735px)"></i><i style="top:44px;height:2px;background:linear-gradient(90deg,#00ff20 0px,#01ff0f 154.5px,#38ff0c 179.5px,#7cff07 206.5px,#bbff03 228.5px,#fffe00 249.5px,#ffba00 274.5px,#ff8900 302.5px,#ff5e00 340.5px,#ff3a00 391.5px,#ff1900 470.5px,#ff0000 577.5px,#ff0000 735px)"></i><i style="top:46px;height:2px;background:linear-gradient(90deg,#00ff23 0px,#01ff13 154.5px,#3aff10 180.5px,#84ff0b 209.5px,#fffe03 249.5px,#ffc000 271.5px,#ff8700 303.5px,#ff5a00 344.5px,#ff3a00 390.5px,#ff1800 472.5px,#ff0000 575.5px,#ff0000 735px)"></i><i style="top:48px;height:2px;background:linear-gradient(90deg,#00ff26 0px,#00ff17 154.5px,#3cff14 181.5px,#79ff10 205.5px,#fffd08 249.5px,#ffbd02 272.5px,#ff8500 304.5px,#ff5b00 342.5px,#ff3a00 389.5px,#ff1600 477.5px,#ff0000 573.5px,#ff0000 735px)"></i><i style="top:50px;height:2px;background:linear-gradient(90deg,#00ff29 0px,#01ff1b 155.5px,#79ff15 205.5px,#fffd0d 249.5px,#ffdd0a 259.5px,#ffb806 274.5px,#ff8700 302.5px,#ff5e00 338.5px,#ff3900 390.5px,#ff1900 466.5px,#ff0000 571.5px,#ff0000 735px)"></i><i style="top:52px;height:2px;background:linear-gradient(90deg,#00ff2c 0px,#01ff1f 155.5px,#3bff1c 181.5px,#76ff19 204.5px,#bcff16 228.5px,#ffff12 248.5px,#ffbe0a 271.5px,#ff8503 303.5px,#ff5900 343.5px,#ff3900 389.5px,#ff1700 471.5px,#ff0000 570.5px,#ff0000 735px)"></i><i style="top:54px;height:2px;background:linear-gradient(90deg,#00ff2f 0px,#00ff24 155.5px,#6bff1e 200.5px,#b6ff1b 226.5px,#ffff18 248.5px,#ffd612 261.5px,#ffbb0e 272.5px,#ff8a07 299.5px,#ff5b01 340.5px,#ff3900 388.5px,#ff1b00 457.5px,#ff0000 568.5px,#ff0000 735px)"></i><i style="top:56px;height:2px;background:linear-gradient(90deg,#00ff32 0px,#01ff28 156.5px,#3fff25 183.5px,#7eff22 207.5px,#fffe1d 248.5px,#ffd817 260.5px,#ffb812 273.5px,#ff850a 302.5px,#ff5603 345.5px,#ff3200 400.5px,#ff1800 465.5px,#ff0000 566.5px,#ff0000 735px)"></i><i style="top:58px;height:2px;background:linear-gradient(90deg,#00ff35 0px,#01ff2c 156.5px,#70ff28 202.5px,#aaff25 222.5px,#fffd22 248.5px,#ffbe17 270.5px,#ff830d 303.5px,#ff5806 342.5px,#ff3200 399.5px,#ff1600 470.5px,#ff0000 564.5px,#ff0000 735px)"></i><i style="top:60px;height:2px;background:linear-gradient(90deg,#00ff38 0px,#00ff30 156.5px,#32ff2e 178.5px,#7bff2c 206.5px,#fffd27 248.5px,#ffbb1b 271.5px,#ff8511 301.5px,#ff5a09 339.5px,#ff3301 396.5px,#ff1500 472.5px,#ff0000 562.5px,#ff0000 735px)"></i><i style="top:62px;height:2px;background:linear-gradient(90deg,#00ff3b 0px,#01ff34 157.5px,#78ff31 205.5px,#fffc2d 248.5px,#ffb81f 272.5px,#ff8314 302.5px,#ff550a 344.5px,#ff3303 395.5px,#ff1700 464.5px,#ff0000 560.5px,#ff0000 735px)"></i><i style="top:64px;height:2px;background:linear-gradient(90deg,#00ff3e 0px,#01ff39 157.5px,#31ff37 178.5px,#78ff36 205.5px,#b7ff34 226.5px,#ffff33 247.5px,#ffd82a 259.5px,#ffb322 274.5px,#ff7e16 305.5px,#ff570e 341.5px,#ff3306 394.5px,#ff1500 469.5px,#ff0000 558.5px,#ff0000 735px)"></i><i style="top:66px;height:2px;background:linear-gradient(90deg,#00ff41 0px,#00ff3d 157.5px,#75ff3b 204.5px,#c1ff39 229.5px,#fffe38 247.5px,#ffcf2d 262.5px,#ffb026 275.5px,#ff7c19 306.5px,#ff530f 345.5px,#ff3308 393.5px,#ff1701 461.5px,#ff0000 556.5px,#ff0000 735px)"></i><i style="top:68px;height:2px;background:linear-gradient(90deg,#00ff45 0px,#00ff41 157.5px,#2bff41 176.5px,#72ff40 203.5px,#beff3f 228.5px,#fffe3e 247.5px,#ffd132 261.5px,#ffb82c 271.5px,#ff7e1d 304.5px,#ff5412 343.5px,#ff330a 392.5px,#ff1502 466.5px,#ff0000 554.5px,#ff0000 735px)"></i><i style="top:70px;height:2px;background:linear-gradient(90deg,#00ff48 0px,#01ff46 158.5px,#6fff45 202.5px,#aeff44 223.5px,#fffd43 247.5px,#ffd338 260.5px,#ffb530 272.5px,#ff8021 302.5px,#ff5616 340.5px,#ff330c 391.5px,#ff1404 468.5px,#ff0000 552.5px,#ff0000 735px)"></i><i style="top:72px;height:2px;background:linear-gradient(90deg,#00ff4b 0px,#00ff4a 158.5px,#6cff4a 201.5px,#abff4a 222.5px,#fffc49 247.5px,#ffd53e 259.5px,#ffb935 270.5px,#ff7e24 303.5px,#ff5117 345.5px,#ff330e 390.5px,#ff1606 460.5px,#ff0000 550.5px,#ff0000 735px)"></i><i style="top:74px;height:2px;background:linear-gradient(90deg,#00ff4e 0px,#00ff4f 158.5px,#36ff4f 181.5px,#7dff4f 207.5px,#ffff50 246.5px,#ffcc40 262.5px,#ffb639 271.5px,#ff8028 301.5px,#ff531a 342.5px,#ff3310 389.5px,#ff1407 465.5px,#ff0001 548.5px,#ff0000 735px)"></i><i style="top:76px;height:2px;background:linear-gradient(90deg,#00ff52 0px,#01ff54 159.5px,#77ff54 205.5px,#b2ff55 224.5px,#fffe55 246.5px,#ffce46 261.5px,#ffb53d 271.5px,#ff7e2b 302.5px,#ff541e 340.5px,#ff3313 388.5px,#ff170a 454.5px,#ff0002 546.5px,#ff0000 735px)"></i><i style="top:78px;height:2px;background:linear-gradient(90deg,#00ff55 0px,#00ff58 159.5px,#71ff5a 203.5px,#b2ff5b 224.5px,#fffe5b 246.5px,#ffd04b 260.5px,#ffb241 272.5px,#ff8030 300.5px,#ff5621 337.5px,#ff3415 385.5px,#ff140a 462.5px,#ff0003 544.5px,#ff0000 735px)"></i><i style="top:80px;height:2px;background:linear-gradient(90deg,#00ff58 0px,#00ff5d 159.5px,#6bff5f 201.5px,#afff60 223.5px,#fffd61 246.5px,#ffd251 259.5px,#ffaf45 273.5px,#ff7e33 301.5px,#ff5925 333.5px,#ff3418 384.5px,#ff120b 467.5px,#ff0005 542.5px,#ff0000 735px)"></i><i style="top:82px;height:2px;background:linear-gradient(90deg,#00ff5c 0px,#01ff62 160.5px,#65ff64 199.5px,#a2ff66 219.5px,#fffc67 246.5px,#ffd759 257.5px,#ffb54c 270.5px,#ff8037 299.5px,#ff5326 339.5px,#ff341a 383.5px,#ff140e 459.5px,#ff0006 540.5px,#ff0000 735px)"></i><i style="top:84px;height:2px;background:linear-gradient(90deg,#00ff5f 0px,#00ff67 160.5px,#5fff69 197.5px,#acff6c 222.5px,#ffff6e 245.5px,#ffcb59 261.5px,#ffb24f 271.5px,#ff7b39 302.5px,#ff552a 336.5px,#ff341d 382.5px,#ff1912 443.5px,#ff0008 538.5px,#ff0000 735px)"></i><i style="top:86px;height:2px;background:linear-gradient(90deg,#00ff62 0px,#00ff6b 160.5px,#5cff6f 196.5px,#9fff71 218.5px,#ffff74 245.5px,#ffbd59 266.5px,#ff803f 298.5px,#ff502b 341.5px,#ff2e1c 392.5px,#ff1512 453.5px,#ff0009 536.5px,#ff0000 735px)"></i><i style="top:88px;height:2px;background:linear-gradient(90deg,#00ff66 0px,#01ff71 161.5px,#3dff73 185.5px,#8fff76 213.5px,#fffe7a 245.5px,#ffde6c 254.5px,#ffb55a 269.5px,#ff7b41 301.5px,#ff512e 339.5px,#ff2e1f 391.5px,#ff1212 461.5px,#ff000a 535.5px,#ff0000 735px)"></i><i style="top:90px;height:2px;background:linear-gradient(90deg,#00ff69 0px,#00ff76 161.5px,#42ff79 187.5px,#7cff7b 207.5px,#fffd80 245.5px,#ffda70 255.5px,#ffb961 267.5px,#ff7d45 299.5px,#ff5332 336.5px,#ff2f22 388.5px,#ff1114 463.5px,#ff000c 533.5px,#ff0000 735px)"></i><i style="top:92px;height:2px;background:linear-gradient(90deg,#00ff6d 0px,#00ff7b 161.5px,#34ff7d 182.5px,#7fff81 208.5px,#fffc87 245.5px,#ffc56c 262.5px,#ffaf61 271.5px,#ff7847 302.5px,#ff4e33 341.5px,#ff2f24 387.5px,#ff1216 458.5px,#ff000d 531.5px,#ff0001 735px)"></i><i style="top:94px;height:2px;background:linear-gradient(90deg,#00ff70 0px,#01ff80 162.5px,#39ff83 184.5px,#82ff87 209.5px,#fffc8d 245.5px,#ffdf7e 253.5px,#ffb56a 268.5px,#ff7d4d 298.5px,#ff4f36 339.5px,#ff3027 384.5px,#ff1117 460.5px,#ff000f 529.5px,#ff0002 735px)"></i><i style="top:96px;height:2px;background:linear-gradient(90deg,#00ff74 0px,#00ff85 162.5px,#49ff8a 190.5px,#82ff8d 209.5px,#ffff95 244.5px,#ffde84 253.5px,#ffb26d 269.5px,#ff784f 301.5px,#ff513b 336.5px,#ff3029 383.5px,#ff171c 440.5px,#ff0010 527.5px,#ff0002 735px)"></i><i style="top:98px;height:2px;background:linear-gradient(90deg,#00ff77 0px,#00ff8a 162.5px,#6fff92 203.5px,#c6ff98 229.5px,#fffe9b 244.5px,#ffda88 254.5px,#ffb172 269.5px,#ff7a54 299.5px,#ff533f 333.5px,#ff302c 382.5px,#ff191f 433.5px,#ff0012 525.5px,#ff0003 735px)"></i><i style="top:100px;height:2px;background:linear-gradient(90deg,#00ff7b 0px,#01ff90 163.5px,#72ff98 204.5px,#b8ff9d 225.5px,#fffda2 244.5px,#ffd38a 256.5px,#ffb579 267.5px,#ff9567 282.5px,#ff7555 302.5px,#ff4d3f 339.5px,#ff302e 381.5px,#ff1620 440.5px,#ff0013 523.5px,#ff0004 735px)"></i><i style="top:102px;height:2px;background:linear-gradient(90deg,#00ff7f 0px,#00ff95 163.5px,#78ff9f 206.5px,#fffda8 244.5px,#ffdf97 252.5px,#ffad7a 270.5px,#ff775b 300.5px,#ff4e43 337.5px,#ff2a2e 391.5px,#ff101e 457.5px,#ff0015 521.5px,#ff0005 735px)"></i><i style="top:104px;height:2px;background:linear-gradient(90deg,#00ff82 0px,#00ff9a 163.5px,#2eff9f 181.5px,#78ffa5 206.5px,#fffcaf 244.5px,#ffdb9b 253.5px,#ffb182 268.5px,#ff7c62 296.5px,#ff5047 334.5px,#ff2b31 388.5px,#ff1222 449.5px,#ff0017 519.5px,#ff0006 735px)"></i><i style="top:106px;height:2px;background:linear-gradient(90deg,#00ff86 0px,#01ffa0 164.5px,#7bffac 207.5px,#c0ffb2 227.5px,#ffffb8 243.5px,#ffdaa1 253.5px,#ffb58a 266.5px,#ff8f72 284.5px,#ff7763 299.5px,#ff4b47 339.5px,#ff2c34 385.5px,#ff1727 433.5px,#ff0018 517.5px,#ff0007 735px)"></i><i style="top:108px;height:2px;background:linear-gradient(90deg,#00ff89 0px,#01ffa6 164.5px,#6effb1 203.5px,#aeffb7 222.5px,#fffebf 243.5px,#ffbc94 263.5px,#ff7f6c 293.5px,#ff4c4b 337.5px,#ff2d37 382.5px,#ff1427 440.5px,#ff001a 515.5px,#ff0007 735px)"></i><i style="top:110px;height:2px;background:linear-gradient(90deg,#00ff8d 0px,#00ffab 164.5px,#71ffb7 204.5px,#a7ffbd 220.5px,#fffec6 243.5px,#ffdfb1 251.5px,#ffbb99 263.5px,#ff8374 290.5px,#ff4d4f 335.5px,#ff2d3a 381.5px,#ff162a 433.5px,#ff001c 513.5px,#ff0008 735px)"></i><i style="top:112px;height:2px;background:linear-gradient(90deg,#00ff91 0px,#01ffb1 165.5px,#74ffbe 205.5px,#fffdcc 243.5px,#ffdbb5 252.5px,#ffb59b 265.5px,#ff7f75 292.5px,#ff4f54 332.5px,#ff2e3d 378.5px,#ff132a 440.5px,#ff001d 511.5px,#ff0009 735px)"></i><i style="top:114px;height:2px;background:linear-gradient(90deg,#00ff95 0px,#01ffb7 165.5px,#45ffbf 190.5px,#81ffc6 209.5px,#fffcd3 243.5px,#ffbca6 262.5px,#ff837d 289.5px,#ff525a 328.5px,#ff2e40 377.5px,#ff162f 430.5px,#ff001f 509.5px,#ff000a 735px)"></i><i style="top:116px;height:2px;background:linear-gradient(90deg,#00ff99 0px,#00ffa6 79.5px,#00ffbd 165.5px,#33ffc3 184.5px,#77ffcc 206.5px,#baffd5 225.5px,#ffffdd 242.5px,#ffd6bf 253.5px,#ffaca0 268.5px,#ff7376 299.5px,#ff4a57 336.5px,#ff283e 387.5px,#ff122e 440.5px,#ff0021 507.5px,#ff000b 735px)"></i><i style="top:118px;height:2px;background:linear-gradient(90deg,#00ff9c 0px,#00ffaf 98.5px,#00ffc3 165.5px,#27ffc8 180.5px,#6dffd1 203.5px,#afffda 222.5px,#ffffe5 242.5px,#ffd5c5 253.5px,#ffb5ad 264.5px,#ff7b80 293.5px,#ff4c5c 333.5px,#ff2a42 382.5px,#ff1532 430.5px,#ff0022 505.5px,#ff000c 735px)"></i><i style="top:120px;height:2px;background:linear-gradient(90deg,#00ffa0 0px,#00ffb0 82.5px,#01ffc9 166.5px,#2cffcf 182.5px,#7affda 207.5px,#fffeec 242.5px,#ffd1c9 254.5px,#ffafae 266.5px,#ff7f88 290.5px,#ff4e62 330.5px,#ff2a45 381.5px,#ff1232 437.5px,#ff0024 503.5px,#ff000c 735px)"></i><i style="top:122px;height:2px;background:linear-gradient(90deg,#00ffa4 0px,#00ffb8 95.5px,#00ffcf 166.5px,#73ffe0 205.5px,#fffdf3 242.5px,#ffdad7 251.5px,#ffb6ba 263.5px,#ff7b8a 292.5px,#ff5168 326.5px,#ff2b49 378.5px,#ff1537 427.5px,#ff0026 501.5px,#ff000d 735px)"></i><i style="top:124px;height:2px;background:linear-gradient(90deg,#00ffa8 0px,#00ffba 84.5px,#00ffd5 166.5px,#25ffdb 180.5px,#7dffe9 208.5px,#fffcfa 242.5px,#ffd6db 252.5px,#ffb5bf 263.5px,#ff778b 294.5px,#ff4965 334.5px,#ff2b4c 377.5px,#ff1237 434.5px,#ff0028 499.5px,#ff000e 735px)"></i><i style="top:126px;height:2px;background:linear-gradient(90deg,#00ffac 0px,#00ffc4 102.5px,#01ffdc 167.5px,#33ffe4 185.5px,#76ffef 206.5px,#dcffff 233.5px,#fff7fe 243.5px,#ffc8d6 256.5px,#ffaabc 267.5px,#ff8ca2 281.5px,#ff6f89 299.5px,#ff4464 339.5px,#ff2549 387.5px,#ff0029 498.5px,#ff000f 735px)"></i><i style="top:128px;height:2px;background:linear-gradient(90deg,#00ffb0 0px,#00ffc4 85.5px,#00ffe2 167.5px,#4bffef 193.5px,#acffff 221.5px,#ffeefe 245.5px,#ffc4d9 257.5px,#ffa2bb 270.5px,#ff6a89 302.5px,#ff3d62 347.5px,#ff2149 394.5px,#ff002b 496.5px,#ff001b 601.5px,#ff0010 735px)"></i><i style="top:130px;height:2px;background:linear-gradient(90deg,#00ffb4 0px,#00ffce 101.5px,#00ffe9 167.5px,#3efff4 189.5px,#80ffff 209.5px,#ffe5fe 247.5px,#ffc4df 257.5px,#ffa1c0 270.5px,#ff82a3 286.5px,#ff6489 306.5px,#ff3f66 344.5px,#ff204b 395.5px,#ff002d 494.5px,#ff001c 602.5px,#ff0011 735px)"></i><i style="top:132px;height:2px;background:linear-gradient(90deg,#00ffb8 0px,#00ffcd 82.5px,#01ffef 168.5px,#57ffff 197.5px,#ffddfe 249.5px,#ff9ec3 271.5px,#ff6790 303.5px,#ff416c 340.5px,#ff1e4b 398.5px,#ff002f 492.5px,#ff001d 603.5px,#ff0011 735px)"></i><i style="top:134px;height:2px;background:linear-gradient(90deg,#00ffbc 0px,#00ffd4 88.5px,#00fff6 168.5px,#31ffff 185.5px,#ffd5fe 251.5px,#ffaed9 264.5px,#ff8fba 278.5px,#ff608e 308.5px,#ff3d6b 345.5px,#ff1d4d 399.5px,#ff0031 490.5px,#ff0020 588.5px,#ff0012 735px)"></i><i style="top:136px;height:2px;background:linear-gradient(90deg,#00ffc0 0px,#00ffdc 96.5px,#00fffd 168.5px,#69ecff 205.5px,#ffcdfe 253.5px,#ffaddf 264.5px,#ff8cbd 279.5px,#ff5e90 309.5px,#ff396b 349.5px,#ff194c 407.5px,#ff0033 488.5px,#ff0021 589.5px,#ff0013 735px)"></i><i style="top:138px;height:2px;background:linear-gradient(90deg,#00ffc4 0px,#00ffde 87.5px,#00fbff 168.5px,#63e6ff 204.5px,#ffc6fe 255.5px,#ff9ed5 270.5px,#ff85bd 282.5px,#ff5a90 312.5px,#ff366b 353.5px,#ff184e 408.5px,#ff0035 486.5px,#ff0022 590.5px,#ff0014 735px)"></i><i style="top:140px;height:2px;background:linear-gradient(90deg,#00ffc9 0px,#00ffe1 81.5px,#00ffff 149.5px,#00f4ff 169.5px,#7adbff 213.5px,#ffbffe 257.5px,#ff84c1 282.5px,#ff558f 316.5px,#ff346d 354.5px,#ff174f 409.5px,#ff0037 484.5px,#ff0024 584.5px,#ff0015 735px)"></i><i style="top:142px;height:2px;background:linear-gradient(90deg,#00ffcd 0px,#00ffe1 67.5px,#00ffff 137.5px,#00eeff 169.5px,#71d6ff 211.5px,#ffb8ff 259.5px,#ff98db 272.5px,#ff7dbe 286.5px,#ff5695 314.5px,#ff336f 355.5px,#ff1651 410.5px,#ff0039 482.5px,#ff0023 600.5px,#ff0016 735px)"></i><i style="top:144px;height:2px;background:linear-gradient(90deg,#00ffd1 0px,#00ffff 125.5px,#00e8ff 169.5px,#6ed0ff 211.5px,#ffb2ff 261.5px,#ff94de 273.5px,#ff78bf 288.5px,#ff5295 317.5px,#ff3271 356.5px,#ff124f 419.5px,#ff003b 480.5px,#ff0023 608.5px,#ff0017 735px)"></i><i style="top:146px;height:2px;background:linear-gradient(90deg,#00ffd5 0px,#00ffff 113.5px,#00e2ff 170.5px,#6bcbff 211.5px,#ffabff 263.5px,#ff91e1 274.5px,#ff74c0 290.5px,#ff4e95 320.5px,#ff3073 357.5px,#ff1756 407.5px,#ff003d 478.5px,#ff0028 581.5px,#ff0017 735px)"></i><i style="top:148px;height:2px;background:linear-gradient(90deg,#00ffda 0px,#00ffff 101.5px,#00dcff 170.5px,#83c0ff 221.5px,#ffa5ff 265.5px,#ff78ca 287.5px,#ff509b 318.5px,#ff2f75 358.5px,#ff185a 403.5px,#ff0040 476.5px,#ff0029 582.5px,#ff0018 735px)"></i><i style="top:150px;height:2px;background:linear-gradient(90deg,#00ffde 0px,#00ffff 88.5px,#00d7ff 170.5px,#68c0ff 212.5px,#ff9fff 267.5px,#ff71c7 291.5px,#ff4d9c 320.5px,#ff2e77 359.5px,#ff1357 414.5px,#ff0042 474.5px,#ff002b 577.5px,#ff0019 735px)"></i><i style="top:152px;height:2px;background:linear-gradient(90deg,#00ffe2 0px,#00ffff 76.5px,#00d1ff 171.5px,#87b4ff 225.5px,#ff9aff 269.5px,#ff6bc6 294.5px,#ff499c 323.5px,#ff2a76 364.5px,#ff135a 412.5px,#ff0044 472.5px,#ff002a 591.5px,#ff001a 735px)"></i><i style="top:154px;height:2px;background:linear-gradient(90deg,#00ffe7 0px,#00ffff 64.5px,#00ccff 171.5px,#77b2ff 220.5px,#ff94ff 271.5px,#ff66c5 297.5px,#ff469d 325.5px,#ff2b7b 361.5px,#ff145e 408.5px,#ff0046 470.5px,#ff002b 592.5px,#ff001b 735px)"></i><i style="top:156px;height:2px;background:linear-gradient(90deg,#00ffeb 0px,#00ffff 52.5px,#00c7ff 171.5px,#4fb6ff 205.5px,#ff8fff 273.5px,#ff68cd 295.5px,#ff439d 328.5px,#ff2577 370.5px,#ff0e5a 421.5px,#ff0049 468.5px,#ff0032 558.5px,#ff001c 735px)"></i><i style="top:158px;height:2px;background:linear-gradient(90deg,#00fff0 0px,#00feff 43.5px,#00c2ff 172.5px,#6aabff 217.5px,#ff8aff 275.5px,#ff63cc 298.5px,#ff409e 330.5px,#ff257b 368.5px,#ff0e5c 421.5px,#ff004b 466.5px,#ff0038 535.5px,#ff001d 735px)"></i><i style="top:160px;height:2px;background:linear-gradient(90deg,#00fff4 0px,#00feff 31.5px,#00beff 172.5px,#65a7ff 216.5px,#ff85ff 277.5px,#ff5dc9 302.5px,#ff3e9f 332.5px,#ff227a 373.5px,#ff0d5e 421.5px,#ff004d 464.5px,#ff0037 546.5px,#ff001d 735px)"></i><i style="top:162px;height:2px;background:linear-gradient(90deg,#00fff9 0px,#00feff 19.5px,#00baff 172.5px,#789eff 225.5px,#ff80ff 279.5px,#ff58c8 305.5px,#ff3ba0 334.5px,#ff207b 375.5px,#ff0d61 419.5px,#ff004f 463.5px,#ff0039 543.5px,#ff001e 735px)"></i><i style="top:164px;height:2px;background:linear-gradient(90deg,#00fffd 0px,#00b5ff 173.5px,#8198ff 230.5px,#ff7bff 281.5px,#ff59ce 304.5px,#ff39a1 336.5px,#ff1d7a 380.5px,#ff095d 432.5px,#ff0052 461.5px,#ff0039 549.5px,#ff001f 735px)"></i><i style="top:166px;height:2px;background:linear-gradient(90deg,#00fcff 0px,#00b1ff 173.5px,#6e98ff 223.5px,#ff77ff 283.5px,#ff58d2 304.5px,#ff36a2 338.5px,#ff1a79 385.5px,#ff075e 434.5px,#ff0054 459.5px,#ff0038 560.5px,#ff0020 735px)"></i><i style="top:168px;height:2px;background:linear-gradient(90deg,#00f7ff 0px,#00adff 173.5px,#808fff 232.5px,#ff72ff 285.5px,#ff53d1 307.5px,#ff34a3 340.5px,#ff1c7f 380.5px,#ff0760 434.5px,#ff0057 457.5px,#ff003b 552.5px,#ff0021 735px)"></i><i style="top:170px;height:2px;background:linear-gradient(90deg,#00f3ff 0px,#00a9ff 174.5px,#7b8cff 231.5px,#ff6eff 287.5px,#ff4ece 311.5px,#ff33a5 341.5px,#ff1a80 382.5px,#ff0661 436.5px,#ff0059 455.5px,#ff003b 558.5px,#ff0022 735px)"></i><i style="top:172px;height:2px;background:linear-gradient(90deg,#00efff 0px,#00a5ff 174.5px,#748aff 229.5px,#ff6aff 289.5px,#ff4acd 314.5px,#ff31a7 342.5px,#ff1b84 380.5px,#ff0562 438.5px,#ff005c 453.5px,#ff003b 564.5px,#ff0023 735px)"></i><i style="top:174px;height:2px;background:linear-gradient(90deg,#00ebff 0px,#00a1ff 174.5px,#8383ff 237.5px,#ff66ff 291.5px,#ff46cc 317.5px,#ff30a9 343.5px,#ff1985 382.5px,#ff0363 440.5px,#ff003e 556.5px,#ff0023 735px)"></i><i style="top:176px;height:2px;background:linear-gradient(90deg,#00e7ff 0px,#009eff 175.5px,#6d84ff 228.5px,#ff62ff 293.5px,#ff42cb 320.5px,#ff2eab 344.5px,#ff1786 384.5px,#ff0264 442.5px,#ff003e 562.5px,#ff0024 735px)"></i><i style="top:178px;height:2px;background:linear-gradient(90deg,#00e3ff 0px,#009aff 175.5px,#6f80ff 230.5px,#ff5eff 295.5px,#ff43d2 318.5px,#ff2dad 345.5px,#ff1484 390.5px,#ff0165 444.5px,#ff003f 563.5px,#ff0025 735px)"></i><i style="top:180px;height:2px;background:linear-gradient(90deg,#00dfff 0px,#0097ff 175.5px,#757bff 234.5px,#ff5aff 297.5px,#ff3fd1 321.5px,#ff25a4 356.5px,#ff1285 392.5px,#ff0065 448.5px,#ff003f 569.5px,#ff0026 735px)"></i><i style="top:182px;height:2px;background:linear-gradient(90deg,#00dbff 0px,#0093ff 176.5px,#7d76ff 239.5px,#ff57ff 299.5px,#ff3cd0 324.5px,#ff25a8 355.5px,#ff1186 394.5px,#ff0066 450.5px,#ff0040 570.5px,#ff0027 735px)"></i><i style="top:184px;height:2px;background:linear-gradient(90deg,#00d7ff 0px,#0090ff 176.5px,#8d6eff 248.5px,#ff53ff 301.5px,#ff3ad2 325.5px,#ff21a6 360.5px,#ff0d82 403.5px,#ff0066 454.5px,#ff0040 576.5px,#ff0028 735px)"></i><i style="top:186px;height:2px;background:linear-gradient(90deg,#00d4ff 0px,#008dff 176.5px,#a565ff 261.5px,#ff50ff 303.5px,#ff37d1 328.5px,#ff23ae 355.5px,#ff0f8a 395.5px,#ff006d 443.5px,#ff0043 568.5px,#ff0029 735px)"></i><i style="top:188px;height:2px;background:linear-gradient(90deg,#00d0ff 0px,#008aff 177.5px,#6e6fff 235.5px,#ff4cff 305.5px,#ff35d3 329.5px,#ff22b1 355.5px,#ff0c88 401.5px,#ff006c 449.5px,#ff0044 569.5px,#ff002a 735px)"></i><i style="top:190px;height:2px;background:linear-gradient(90deg,#00cdff 0px,#0087ff 177.5px,#686eff 233.5px,#ff49ff 307.5px,#ff30cf 334.5px,#ff17a1 374.5px,#ff0076 435.5px,#ff006b 455.5px,#ff0046 566.5px,#ff002a 735px)"></i><i style="top:192px;height:2px;background:linear-gradient(90deg,#00caff 0px,#0084ff 177.5px,#7f65ff 246.5px,#ff46ff 309.5px,#ff2ed1 335.5px,#ff17a4 373.5px,#ff0079 433.5px,#ff006b 459.5px,#ff0044 580.5px,#ff002b 735px)"></i><i style="top:194px;height:2px;background:linear-gradient(90deg,#00c6ff 0px,#0081ff 178.5px,#8e5eff 255.5px,#ff43ff 311.5px,#ff29cc 341.5px,#ff14a2 378.5px,#ff007c 431.5px,#ff006b 463.5px,#ff0045 581.5px,#ff002c 735px)"></i><i style="top:196px;height:2px;background:linear-gradient(90deg,#00c3ff 0px,#007fff 178.5px,#7362ff 242.5px,#ff40ff 313.5px,#ff2edb 333.5px,#ff1cb6 361.5px,#ff0e9a 390.5px,#ff007f 429.5px,#ff0071 454.5px,#ff0046 582.5px,#ff002d 735px)"></i><i style="top:198px;height:2px;background:linear-gradient(90deg,#00c0ff 0px,#007cff 178.5px,#7c5dff 248.5px,#ff3dff 315.5px,#ff27d1 342.5px,#ff0fa0 386.5px,#ff0082 427.5px,#ff006f 462.5px,#ff0047 583.5px,#ff002e 735px)"></i><i style="top:200px;height:2px;background:linear-gradient(90deg,#00bdff 0px,#0079ff 178.5px,#785bff 247.5px,#ff3aff 317.5px,#ff22cc 348.5px,#ff11a8 380.5px,#ff0085 426.5px,#ff006e 468.5px,#ff0048 584.5px,#ff002f 735px)"></i><i style="top:202px;height:2px;background:linear-gradient(90deg,#00baff 0px,#0077ff 179.5px,#7f57ff 252.5px,#ff37ff 319.5px,#ff23d2 346.5px,#ff0ea5 386.5px,#ff0088 424.5px,#ff006d 474.5px,#ff0049 585.5px,#ff0030 735px)"></i><i style="top:204px;height:2px;background:linear-gradient(90deg,#00b7ff 0px,#0074ff 179.5px,#6b59ff 242.5px,#ff35ff 321.5px,#ff1cc8 356.5px,#ff0ba4 390.5px,#ff008c 422.5px,#ff0072 467.5px,#ff004a 586.5px,#ff0031 735px)"></i><i style="top:206px;height:2px;background:linear-gradient(90deg,#00b4ff 0px,#0072ff 179.5px,#7953ff 251.5px,#ff32ff 323.5px,#ff22da 345.5px,#ff11b5 375.5px,#ff008f 420.5px,#ff007c 451.5px,#ff0064 504.5px,#ff004f 571.5px,#ff0031 735px)"></i><i style="top:208px;height:2px;background:linear-gradient(90deg,#00b2ff 0px,#006fff 180.5px,#854eff 259.5px,#ff30ff 325.5px,#ff1fd9 348.5px,#ff12bb 372.5px,#ff0093 418.5px,#ff007f 449.5px,#ff0066 503.5px,#ff0050 572.5px,#ff0032 735px)"></i><i style="top:210px;height:2px;background:linear-gradient(90deg,#00afff 0px,#006dff 180.5px,#754fff 251.5px,#ff2dff 327.5px,#ff12c0 370.5px,#ff0097 416.5px,#ff007d 456.5px,#ff0051 573.5px,#ff0033 735px)"></i><i style="top:212px;height:2px;background:linear-gradient(90deg,#00acff 0px,#006bff 180.5px,#734eff 251.5px,#ff2bff 329.5px,#ff1dde 349.5px,#ff0eba 378.5px,#ff009a 414.5px,#ff0080 454.5px,#ff0066 511.5px,#ff0052 574.5px,#ff0034 735px)"></i><i style="top:214px;height:2px;background:linear-gradient(90deg,#00aaff 0px,#0068ff 181.5px,#7d49ff 258.5px,#ff28ff 331.5px,#ff16d2 360.5px,#ff06ab 396.5px,#ff009e 412.5px,#ff007d 463.5px,#ff0052 579.5px,#ff0035 735px)"></i><i style="top:216px;height:2px;background:linear-gradient(90deg,#00a7ff 0px,#0066ff 181.5px,#8046ff 261.5px,#ff26ff 333.5px,#ff0ec4 374.5px,#ff00a2 410.5px,#ff0081 459.5px,#ff0068 514.5px,#ff0053 580.5px,#ff0036 735px)"></i><i style="top:218px;height:2px;background:linear-gradient(90deg,#00a5ff 0px,#0064ff 181.5px,#7945ff 258.5px,#ff23ff 335.5px,#ff12d3 364.5px,#ff04b0 396.5px,#ff007d 470.5px,#ff0054 581.5px,#ff0037 735px)"></i><i style="top:220px;height:2px;background:linear-gradient(90deg,#00a2ff 0px,#0062ff 182.5px,#7c42ff 261.5px,#ff21ff 337.5px,#ff10d2 367.5px,#ff02ad 402.5px,#ff0082 464.5px,#ff0058 571.5px,#ff0038 735px)"></i><i style="top:222px;height:2px;background:linear-gradient(90deg,#00a0ff 0px,#0060ff 182.5px,#7243ff 256.5px,#ff1fff 339.5px,#ff0fd5 367.5px,#ff03b4 397.5px,#ff007f 473.5px,#ff0057 579.5px,#ff0039 735px)"></i><i style="top:224px;height:2px;background:linear-gradient(90deg,#009eff 0px,#005eff 182.5px,#7d3eff 264.5px,#ff1dff 341.5px,#ff0ed8 367.5px,#ff00b0 404.5px,#ff0084 467.5px,#ff0058 580.5px,#ff003a 735px)"></i><i style="top:226px;height:2px;background:linear-gradient(90deg,#009bff 0px,#005cff 183.5px,#783dff 262.5px,#ff1afe 344.5px,#ff0cd7 370.5px,#ff01b8 398.5px,#ff0099 436.5px,#ff0081 476.5px,#ff0059 581.5px,#ff003a 735px)"></i><i style="top:228px;height:2px;background:linear-gradient(90deg,#0099ff 0px,#005aff 183.5px,#733cff 260.5px,#ff18fe 346.5px,#ff0cda 370.5px,#ff00b3 406.5px,#ff0086 470.5px,#ff005a 582.5px,#ff003b 735px)"></i><i style="top:230px;height:2px;background:linear-gradient(90deg,#0097ff 0px,#0059ff 183.5px,#763aff 263.5px,#ff16fe 348.5px,#ff09d9 373.5px,#ff00bc 399.5px,#ff009b 439.5px,#ff0084 477.5px,#ff0059 590.5px,#ff003c 735px)"></i><i style="top:232px;height:2px;background:linear-gradient(90deg,#0095ff 0px,#0056ff 184.5px,#6b3bff 257.5px,#ff14fe 350.5px,#ff05d2 381.5px,#ff00b6 408.5px,#ff0088 473.5px,#ff005e 577.5px,#ff003d 735px)"></i><i style="top:234px;height:2px;background:linear-gradient(90deg,#0092ff 0px,#0055ff 184.5px,#7736ff 266.5px,#ff12fe 352.5px,#ff08e0 372.5px,#ff00bf 401.5px,#ff00a0 438.5px,#ff0087 478.5px,#ff0059 599.5px,#ff003e 735px)"></i><i style="top:236px;height:2px;background:linear-gradient(90deg,#0090ff 0px,#0053ff 184.5px,#593cff 247.5px,#ff10fe 354.5px,#ff00cc 391.5px,#ff00b8 411.5px,#ff0083 489.5px,#ff005d 589.5px,#ff003f 735px)"></i><i style="top:238px;height:2px;background:linear-gradient(90deg,#008eff 0px,#0051ff 185.5px,#5c39ff 250.5px,#ff0efe 356.5px,#ff00d1 389.5px,#ff00c0 405.5px,#ff008a 479.5px,#ff005e 590.5px,#ff0040 735px)"></i><i style="top:240px;height:2px;background:linear-gradient(90deg,#008cff 0px,#0050ff 185.5px,#6f32ff 264.5px,#ff0dfe 358.5px,#ff00d6 387.5px,#ff00b9 415.5px,#ff0088 486.5px,#ff0061 584.5px,#ff0041 735px)"></i><i style="top:242px;height:2px;background:linear-gradient(90deg,#008aff 0px,#004eff 185.5px,#7c2dff 274.5px,#ff0bfe 360.5px,#ff00db 385.5px,#ff00c0 410.5px,#ff008d 480.5px,#ff005f 595.5px,#ff0042 735px)"></i><i style="top:244px;height:2px;background:linear-gradient(90deg,#0088ff 0px,#004cff 186.5px,#832aff 280.5px,#ff09fe 362.5px,#ff00e1 383.5px,#ff00bb 418.5px,#ff008c 485.5px,#ff0060 596.5px,#ff0042 735px)"></i><i style="top:246px;height:2px;background:linear-gradient(90deg,#0087ff 0px,#004bff 186.5px,#702dff 268.5px,#ff07fe 364.5px,#ff00e6 381.5px,#ff00c0 415.5px,#ff008b 490.5px,#ff0063 590.5px,#ff0043 735px)"></i><i style="top:248px;height:2px;background:linear-gradient(90deg,#0085ff 0px,#0049ff 186.5px,#662eff 262.5px,#ff06fe 366.5px,#ff00eb 379.5px,#ff00bc 422.5px,#ff0087 501.5px,#ff0061 601.5px,#ff0044 735px)"></i><i style="top:250px;height:2px;background:linear-gradient(90deg,#0083ff 0px,#0047ff 187.5px,#7b27ff 278.5px,#ff04fe 368.5px,#ff00c0 420.5px,#ff008f 489.5px,#ff0064 595.5px,#ff0045 735px)"></i><i style="top:252px;height:2px;background:linear-gradient(90deg,#0081ff 0px,#0046ff 187.5px,#7128ff 272.5px,#ff02fe 370.5px,#ff00d9 398.5px,#ff00bc 427.5px,#ff008e 494.5px,#ff0064 599.5px,#ff0046 735px)"></i><i style="top:254px;height:2px;background:linear-gradient(90deg,#007fff 0px,#0045ff 187.5px,#8022ff 284.5px,#ff01fe 372.5px,#ff00c0 425.5px,#ff008c 501.5px,#ff0062 610.5px,#ff0047 735px)"></i><i style="top:256px;height:2px;background:linear-gradient(90deg,#007dff 0px,#0043ff 188.5px,#7d22ff 283.5px,#ff00fe 374.5px,#ff00c6 421.5px,#ff0092 493.5px,#ff0068 594.5px,#ff0048 735px)"></i><i style="top:258px;height:2px;background:linear-gradient(90deg,#007cff 0px,#0042ff 188.5px,#7a21ff 282.5px,#ff00fe 376.5px,#ff00c1 429.5px,#ff0092 496.5px,#ff0065 608.5px,#ff0049 735px)"></i><i style="top:260px;height:2px;background:linear-gradient(90deg,#007aff 0px,#0040ff 188.5px,#8a1bff 295.5px,#ff00fe 378.5px,#ff00d8 408.5px,#ff00bd 436.5px,#ff0091 501.5px,#ff0069 599.5px,#ff004a 735px)"></i><i style="top:262px;height:2px;background:linear-gradient(90deg,#0078ff 0px,#003fff 189.5px,#8b1aff 297.5px,#ea00ff 365.5px,#ff00fe 380.5px,#ff00c1 434.5px,#ff0090 506.5px,#ff0069 603.5px,#ff004b 735px)"></i><i style="top:264px;height:2px;background:linear-gradient(90deg,#0077ff 0px,#003eff 189.5px,#781dff 284.5px,#e500ff 363.5px,#ff00fe 382.5px,#ff00c4 433.5px,#ff008f 511.5px,#ff0066 617.5px,#ff004c 735px)"></i><i style="top:266px;height:2px;background:linear-gradient(90deg,#0075ff 0px,#003cff 189.5px,#6322ff 269.5px,#df00ff 361.5px,#ff00fe 384.5px,#ff00c9 430.5px,#ff0096 501.5px,#ff006d 598.5px,#ff004d 735px)"></i><i style="top:268px;height:2px;background:linear-gradient(90deg,#0074ff 0px,#003bff 190.5px,#751bff 284.5px,#da00ff 359.5px,#ff00fe 386.5px,#ff00c4 438.5px,#ff0096 504.5px,#ff006c 605.5px,#ff004d 735px)"></i><i style="top:270px;height:2px;background:linear-gradient(90deg,#0072ff 0px,#003aff 190.5px,#711bff 282.5px,#d500ff 357.5px,#ff00fe 388.5px,#ff00c7 437.5px,#ff0095 509.5px,#ff006c 609.5px,#ff004e 735px)"></i><i style="top:272px;height:2px;background:linear-gradient(90deg,#0071ff 0px,#0038ff 190.5px,#681cff 276.5px,#d000ff 355.5px,#ff00fe 390.5px,#ff00c3 444.5px,#ff0095 512.5px,#ff006c 613.5px,#ff004f 735px)"></i><i style="top:274px;height:2px;background:linear-gradient(90deg,#006fff 0px,#0037ff 191.5px,#cb00ff 353.5px,#ff00fe 392.5px,#ff00c6 443.5px,#ff0095 515.5px,#ff006b 620.5px,#ff0050 735px)"></i><i style="top:276px;height:2px;background:linear-gradient(90deg,#006eff 0px,#0036ff 191.5px,#c600ff 351.5px,#ff00fe 394.5px,#ff00c3 449.5px,#ff0094 520.5px,#ff006f 611.5px,#ff0051 735px)"></i><i style="top:278px;height:2px;background:linear-gradient(90deg,#006cff 0px,#0035ff 191.5px,#c100ff 349.5px,#ff00fe 396.5px,#ff00c6 448.5px,#ff0094 523.5px,#ff006e 618.5px,#ff0052 735px)"></i><i style="top:280px;height:2px;background:linear-gradient(90deg,#006bff 0px,#0033ff 192.5px,#bc00ff 347.5px,#ff00fe 398.5px,#ff00c8 448.5px,#ff009b 513.5px,#ff006e 622.5px,#ff0053 735px)"></i><i style="top:282px;height:2px;background:linear-gradient(90deg,#0069ff 0px,#0032ff 192.5px,#b800ff 345.5px,#ff00fe 400.5px,#ff00c5 454.5px,#ff009b 516.5px,#ff0072 613.5px,#ff0054 735px)"></i><i style="top:284px;height:2px;background:linear-gradient(90deg,#0068ff 0px,#0031ff 192.5px,#b300ff 343.5px,#ff00fe 402.5px,#ff00c7 454.5px,#ff009c 517.5px,#ff0070 623.5px,#ff0055 735px)"></i><i style="top:286px;height:2px;background:linear-gradient(90deg,#0066ff 0px,#0030ff 193.5px,#af00ff 341.5px,#ff00fe 404.5px,#ff00ca 453.5px,#ff009c 520.5px,#ff0070 627.5px,#ff0056 735px)"></i><i style="top:288px;height:2px;background:linear-gradient(90deg,#0065ff 0px,#002fff 193.5px,#aa00ff 339.5px,#ff00ff 406.5px,#ff00cc 453.5px,#ff009c 523.5px,#ff0074 618.5px,#ff0057 735px)"></i><i style="top:290px;height:2px;background:linear-gradient(90deg,#0064ff 0px,#002eff 193.5px,#a600ff 337.5px,#ff00ff 408.5px,#ff00c9 459.5px,#ff009d 524.5px,#ff0072 628.5px,#ff0058 735px)"></i><i style="top:292px;height:2px;background:linear-gradient(90deg,#0062ff 0px,#002dff 194.5px,#a200ff 335.5px,#ff00ff 410.5px,#ff00cb 459.5px,#ff009d 527.5px,#ff0071 635.5px,#ff0059 735px)"></i><i style="top:294px;height:2px;background:linear-gradient(90deg,#0061ff 0px,#002cff 194.5px,#9e00ff 333.5px,#ff00ff 412.5px,#ff00cd 459.5px,#ff009e 528.5px,#ff0079 614.5px,#ff0059 735px)"></i><i style="top:296px;height:2px;background:linear-gradient(90deg,#0060ff 0px,#002bff 194.5px,#9b00ff 332.5px,#ff00ff 414.5px,#ff00ca 465.5px,#ff009f 529.5px,#ff007c 609.5px,#ff005a 735px)"></i><i style="top:298px;height:2px;background:linear-gradient(90deg,#005fff 0px,#002aff 195.5px,#9700ff 330.5px,#ff00ff 416.5px,#ff00cc 465.5px,#ff009f 532.5px,#ff007f 604.5px,#ff005b 735px)"></i><i style="top:300px;height:2px;background:linear-gradient(90deg,#005dff 0px,#0029ff 195.5px,#9300ff 328.5px,#ff00ff 418.5px,#ff00c9 471.5px,#ff00a0 533.5px,#ff007c 616.5px,#ff005c 735px)"></i><i style="top:302px;height:2px;background:linear-gradient(90deg,#005cff 0px,#0028ff 195.5px,#8f00ff 326.5px,#ff00ff 420.5px,#ff00cb 471.5px,#ff00a1 534.5px,#ff007f 611.5px,#ff005d 735px)"></i><i style="top:304px;height:2px;background:linear-gradient(90deg,#005bff 0px,#0027ff 196.5px,#8c00ff 324.5px,#ff00ff 422.5px,#ff00cd 471.5px,#ff00a2 535.5px,#ff007d 620.5px,#ff005e 735px)"></i><i style="top:306px;height:2px;background:linear-gradient(90deg,#005aff 0px,#0026ff 196.5px,#8800ff 322.5px,#ff00ff 424.5px,#ff00ca 477.5px,#ff00a3 536.5px,#ff0080 615.5px,#ff005f 735px)"></i><i style="top:308px;height:2px;background:linear-gradient(90deg,#0059ff 0px,#0025ff 196.5px,#8400ff 320.5px,#ff00ff 426.5px,#ff00d0 472.5px,#ff00a4 537.5px,#ff007d 627.5px,#ff0060 735px)"></i><i style="top:310px;height:2px;background:linear-gradient(90deg,#0057ff 0px,#0024ff 197.5px,#8100ff 318.5px,#ff00ff 428.5px,#ff00d2 472.5px,#ff00a5 538.5px,#ff0080 622.5px,#ff0061 735px)"></i><i style="top:312px;height:2px;background:linear-gradient(90deg,#0056ff 0px,#0023ff 197.5px,#7d00ff 316.5px,#ff00ff 430.5px,#ff00cf 478.5px,#ff00a6 539.5px,#ff007d 634.5px,#ff0062 735px)"></i><i style="top:314px;height:2px;background:linear-gradient(90deg,#0055ff 0px,#0022ff 197.5px,#7a00ff 314.5px,#ff00ff 432.5px,#ff00d1 478.5px,#ff00a7 540.5px,#ff0081 626.5px,#ff0063 735px)"></i><i style="top:316px;height:2px;background:linear-gradient(90deg,#0054ff 0px,#0021ff 198.5px,#7600ff 312.5px,#ff00ff 434.5px,#ff00ca 489.5px,#ff00a0 556.5px,#ff007f 635.5px,#ff0064 735px)"></i><i style="top:318px;height:2px;background:linear-gradient(90deg,#0053ff 0px,#0020ff 198.5px,#7300ff 310.5px,#ff00ff 436.5px,#ff00cf 485.5px,#ff00a2 555.5px,#ff0083 627.5px,#ff0065 735px)"></i><i style="top:320px;height:2px;background:linear-gradient(90deg,#0052ff 0px,#001fff 198.5px,#7000ff 308.5px,#ff00ff 438.5px,#ff00cd 490.5px,#ff00a4 554.5px,#ff0080 639.5px,#ff0066 735px)"></i><i style="top:322px;height:2px;background:linear-gradient(90deg,#0051ff 0px,#011eff 200.5px,#6c00ff 306.5px,#ff00ff 440.5px,#ff00ce 491.5px,#ff00a6 553.5px,#ff0084 631.5px,#ff0067 735px)"></i><i style="top:324px;height:2px;background:linear-gradient(90deg,#0050ff 0px,#001eff 199.5px,#6900ff 304.5px,#ff00ff 442.5px,#ff00cc 496.5px,#ff00a7 554.5px,#ff0082 640.5px,#ff0068 735px)"></i><i style="top:326px;height:2px;background:linear-gradient(90deg,#004fff 0px,#001dff 199.5px,#6600ff 302.5px,#ff00ff 444.5px,#ff00d1 492.5px,#ff00a9 553.5px,#ff0086 632.5px,#ff0068 735px)"></i><i style="top:328px;height:2px;background:linear-gradient(90deg,#004eff 0px,#011cff 201.5px,#6300ff 300.5px,#ff00ff 446.5px,#ff00d2 493.5px,#ff00aa 554.5px,#ff0084 641.5px,#ff0069 735px)"></i><i style="top:330px;height:2px;background:linear-gradient(90deg,#004dff 0px,#001bff 200.5px,#6000ff 298.5px,#ff00ff 448.5px,#ff00d0 498.5px,#ff00ac 553.5px,#ff0087 636.5px,#ff006a 735px)"></i><i style="top:332px;height:2px;background:linear-gradient(90deg,#004cff 0px,#001aff 200.5px,#5d00ff 296.5px,#ff00ff 450.5px,#ff00d1 499.5px,#ff00a6 567.5px,#ff0086 642.5px,#ff006b 735px)"></i><i style="top:334px;height:2px;background:linear-gradient(90deg,#004bff 0px,#0119ff 202.5px,#5a00ff 294.5px,#ff00ff 452.5px,#ff00d2 500.5px,#ff00a8 566.5px,#ff0084 651.5px,#ff006c 735px)"></i><i style="top:336px;height:2px;background:linear-gradient(90deg,#004aff 0px,#0019ff 201.5px,#5700ff 292.5px,#ff00ff 454.5px,#ff00d3 501.5px,#ff00ab 563.5px,#ff0088 643.5px,#ff006d 735px)"></i><i style="top:338px;height:2px;background:linear-gradient(90deg,#0049ff 0px,#0018ff 201.5px,#5400ff 290.5px,#ff00ff 456.5px,#ff00d1 506.5px,#ff00ac 564.5px,#ff008b 638.5px,#ff006e 735px)"></i><i style="top:340px;height:2px;background:linear-gradient(90deg,#0048ff 0px,#0117ff 203.5px,#5100ff 288.5px,#ff00ff 458.5px,#ff00d2 507.5px,#ff00ae 563.5px,#ff008a 644.5px,#ff006f 735px)"></i><i style="top:342px;height:2px;background:linear-gradient(90deg,#0047ff 0px,#0016ff 202.5px,#4f00ff 286.5px,#ff00ff 460.5px,#ff00d0 512.5px,#ff00a6 581.5px,#ff0089 650.5px,#ff0070 735px)"></i><i style="top:344px;height:2px;background:linear-gradient(90deg,#0046ff 0px,#0016ff 202.5px,#4c00ff 284.5px,#ff00ff 462.5px,#ff00d4 509.5px,#ff00ab 574.5px,#ff0088 656.5px,#ff0071 735px)"></i><i style="top:346px;height:2px;background:linear-gradient(90deg,#0045ff 0px,#0115ff 204.5px,#4900ff 282.5px,#ff00ff 464.5px,#ff00d5 510.5px,#ff00ae 571.5px,#ff008f 640.5px,#ff0072 735px)"></i><i style="top:348px;height:2px;background:linear-gradient(90deg,#0044ff 0px,#0014ff 203.5px,#4700ff 280.5px,#ff00ff 466.5px,#ff00d6 511.5px,#ff00b0 570.5px,#ff008b 654.5px,#ff0073 735px)"></i><i style="top:350px;height:2px;background:linear-gradient(90deg,#0043ff 0px,#0014ff 203.5px,#4400ff 278.5px,#ff00ff 468.5px,#ff00d7 512.5px,#ff00b2 569.5px,#ff008e 649.5px,#ff0074 735px)"></i><i style="top:352px;height:2px;background:linear-gradient(90deg,#0043ff 0px,#0112ff 205.5px,#4100ff 276.5px,#ff00ff 470.5px,#ff00d2 521.5px,#ff00ad 581.5px,#ff008d 655.5px,#ff0075 735px)"></i><i style="top:354px;height:2px;background:linear-gradient(90deg,#0042ff 0px,#0012ff 204.5px,#3f00ff 274.5px,#ff00ff 472.5px,#ff00d3 522.5px,#ff00b0 578.5px,#ff0090 650.5px,#ff0076 735px)"></i><i style="top:356px;height:2px;background:linear-gradient(90deg,#0041ff 0px,#0011ff 204.5px,#3c00ff 272.5px,#ff00ff 474.5px,#ff00d4 523.5px,#ff00b2 577.5px,#ff0090 653.5px,#ff0077 735px)"></i><i style="top:358px;height:2px;background:linear-gradient(90deg,#0040ff 0px,#0110ff 206.5px,#3a00ff 270.5px,#ff00ff 476.5px,#ff00db 516.5px,#ff00b4 576.5px,#ff0095 643.5px,#ff0078 735px)"></i><i style="top:360px;height:2px;background:linear-gradient(90deg,#003fff 0px,#0010ff 205.5px,#3700ff 268.5px,#ff00ff 478.5px,#ff00d3 529.5px,#ff00af 588.5px,#ff008f 662.5px,#ff0079 735px)"></i><i style="top:362px;height:2px;background:linear-gradient(90deg,#003eff 0px,#000fff 205.5px,#3500ff 266.5px,#ff00ff 480.5px,#ff00d4 530.5px,#ff00b3 583.5px,#ff0092 657.5px,#ff007a 735px)"></i><i style="top:364px;height:2px;background:linear-gradient(90deg,#003dff 0px,#010eff 207.5px,#3300ff 264.5px,#9400ff 372.5px,#ff00ff 482.5px,#ff00da 524.5px,#ff00b5 582.5px,#ff0097 647.5px,#ff007b 735px)"></i><i style="top:366px;height:2px;background:linear-gradient(90deg,#003dff 0px,#000eff 206.5px,#3000ff 262.5px,#ff00ff 484.5px,#ff00d8 529.5px,#ff00af 596.5px,#ff0091 666.5px,#ff007c 735px)"></i><i style="top:368px;height:2px;background:linear-gradient(90deg,#003cff 0px,#000eff 206.5px,#2e00ff 260.5px,#9800ff 379.5px,#ff00ff 486.5px,#ff00d6 534.5px,#ff00b3 591.5px,#ff0097 653.5px,#ff007d 735px)"></i><i style="top:370px;height:2px;background:linear-gradient(90deg,#003bff 0px,#010cff 208.5px,#2c00ff 258.5px,#9400ff 376.5px,#ff00ff 488.5px,#ff00d7 535.5px,#ff00b6 588.5px,#ff0097 656.5px,#ff007e 735px)"></i><i style="top:372px;height:2px;background:linear-gradient(90deg,#003aff 0px,#000cff 207.5px,#2900ff 256.5px,#ff00ff 490.5px,#ff00d5 540.5px,#ff00b9 585.5px,#ff0097 659.5px,#ff007f 735px)"></i><i style="top:374px;height:2px;background:linear-gradient(90deg,#003aff 0px,#000cff 207.5px,#2700ff 254.5px,#9700ff 382.5px,#ff00ff 492.5px,#ff00db 534.5px,#ff00b5 595.5px,#ff0094 670.5px,#ff0080 735px)"></i><i style="top:376px;height:2px;background:linear-gradient(90deg,#0039ff 0px,#010bff 209.5px,#2600ff 253.5px,#9d00ff 390.5px,#ff00ff 494.5px,#ff00d9 539.5px,#ff00b8 592.5px,#ff0099 660.5px,#ff0081 735px)"></i><i style="top:378px;height:2px;background:linear-gradient(90deg,#0038ff 0px,#000aff 208.5px,#2400ff 251.5px,#9100ff 378.5px,#ff00ff 496.5px,#ff00da 540.5px,#ff00bb 589.5px,#ff0099 663.5px,#ff0082 735px)"></i><i style="top:380px;height:2px;background:linear-gradient(90deg,#0037ff 0px,#000aff 208.5px,#2200ff 249.5px,#8e00ff 376.5px,#ff00ff 498.5px,#ff00d8 545.5px,#ff00b7 599.5px,#ff0099 666.5px,#ff0083 735px)"></i><i style="top:382px;height:2px;background:linear-gradient(90deg,#0037ff 0px,#0109ff 210.5px,#2000ff 247.5px,#8c00ff 375.5px,#ff00ff 500.5px,#ff00db 543.5px,#ff00ba 596.5px,#ff0099 669.5px,#ff0084 735px)"></i><i style="top:384px;height:2px;background:linear-gradient(90deg,#0036ff 0px,#0009ff 209.5px,#1d00ff 245.5px,#9100ff 382.5px,#ff00ff 502.5px,#ff00dc 544.5px,#ff00bd 593.5px,#ff009c 664.5px,#ff0085 735px)"></i><i style="top:386px;height:2px;background:linear-gradient(90deg,#0035ff 0px,#0008ff 209.5px,#1b00ff 243.5px,#8800ff 373.5px,#ff00ff 504.5px,#ff00da 549.5px,#ff00b9 603.5px,#ff009c 667.5px,#ff0086 735px)"></i><i style="top:388px;height:2px;background:linear-gradient(90deg,#0034ff 0px,#0107ff 211.5px,#1900ff 241.5px,#8d00ff 380.5px,#ff00ff 506.5px,#ff00dd 547.5px,#ff00bc 600.5px,#ff009c 670.5px,#ff0087 735px)"></i><i style="top:390px;height:2px;background:linear-gradient(90deg,#0034ff 0px,#0007ff 210.5px,#1700ff 239.5px,#8b00ff 379.5px,#ff00ff 508.5px,#ff00d9 555.5px,#ff00b7 612.5px,#ff0087 735px)"></i><i style="top:392px;height:2px;background:linear-gradient(90deg,#0033ff 0px,#0006ff 210.5px,#1500ff 237.5px,#7800ff 358.5px,#ff00ff 510.5px,#ff00dc 553.5px,#ff00bc 605.5px,#ff0088 735px)"></i><i style="top:394px;height:2px;background:linear-gradient(90deg,#0032ff 0px,#0006ff 210.5px,#1300ff 235.5px,#8200ff 371.5px,#ff00ff 512.5px,#ff00da 558.5px,#ff00bf 602.5px,#ff0089 735px)"></i><i style="top:396px;height:2px;background:linear-gradient(90deg,#0032ff 0px,#0005ff 211.5px,#1200ff 233.5px,#8100ff 371.5px,#ff00ff 514.5px,#ff00dd 556.5px,#ff00bb 612.5px,#ff008a 735px)"></i><i style="top:398px;height:2px;background:linear-gradient(90deg,#0031ff 0px,#0005ff 211.5px,#1000ff 231.5px,#8500ff 377.5px,#ff00ff 516.5px,#ff00e0 554.5px,#ff00bf 607.5px,#ff008b 735px)"></i><i style="top:400px;height:2px;background:linear-gradient(90deg,#0030ff 0px,#0004ff 211.5px,#7500ff 359.5px,#ff00ff 518.5px,#ff00c2 604.5px,#ff008c 735px)"></i><i style="top:402px;height:2px;background:linear-gradient(90deg,#0030ff 0px,#0004ff 212.5px,#7900ff 365.5px,#ff00ff 520.5px,#ff00df 560.5px,#ff00bf 612.5px,#ff008d 735px)"></i><i style="top:404px;height:2px;background:linear-gradient(90deg,#002fff 0px,#0003ff 212.5px,#7d00ff 371.5px,#ff00ff 522.5px,#ff00c2 609.5px,#ff008e 735px)"></i><i style="top:406px;height:2px;background:linear-gradient(90deg,#002eff 0px,#0003ff 212.5px,#7c00ff 371.5px,#ff00ff 524.5px,#ff00e0 563.5px,#ff00be 619.5px,#ff008f 735px)"></i><i style="top:408px;height:2px;background:linear-gradient(90deg,#002eff 0px,#0002ff 213.5px,#8400ff 382.5px,#ff00ff 526.5px,#ff00c2 614.5px,#ff0090 735px)"></i><i style="top:410px;height:2px;background:linear-gradient(90deg,#002dff 0px,#0002ff 213.5px,#8300ff 382.5px,#ff00ff 528.5px,#ff00e1 566.5px,#ff00be 624.5px,#ff0091 735px)"></i><i style="top:412px;height:2px;background:linear-gradient(90deg,#002cff 0px,#0001ff 213.5px,#8200ff 382.5px,#ff00ff 530.5px,#ff00c3 617.5px,#ff0092 735px)"></i><i style="top:414px;height:2px;background:linear-gradient(90deg,#002cff 0px,#0001ff 214.5px,#9200ff 403.5px,#ff00ff 532.5px,#ff00e2 569.5px,#ff00be 629.5px,#ff0093 735px)"></i><i style="top:416px;height:2px;background:linear-gradient(90deg,#002bff 0px,#0000ff 214.5px,#7100ff 363.5px,#ff00ff 534.5px,#ff00c3 622.5px,#ff0094 735px)"></i><i style="top:418px;height:2px;background:linear-gradient(90deg,#002bff 0px,#0000ff 214.5px,#7800ff 373.5px,#ff00ff 536.5px,#ff00c7 617.5px,#ff0095 735px)"></i><i style="top:420px;height:2px;background:linear-gradient(90deg,#002aff 0px,#0000ff 215.5px,#7b00ff 378.5px,#ff00ff 538.5px,#ff00c4 625.5px,#ff0096 735px)"></i><i style="top:422px;height:2px;background:linear-gradient(90deg,#0029ff 0px,#0000ff 215.5px,#7e00ff 383.5px,#ff00ff 540.5px,#ff00c7 622.5px,#ff0097 735px)"></i><i style="top:424px;height:2px;background:linear-gradient(90deg,#0029ff 0px,#0000ff 215.5px,#8800ff 397.5px,#ff00ff 542.5px,#ff00c4 630.5px,#ff0098 735px)"></i><i style="top:426px;height:2px;background:linear-gradient(90deg,#0028ff 0px,#0000ff 216.5px,#7600ff 375.5px,#ff00ff 544.5px,#ff00c8 625.5px,#ff0099 735px)"></i><i style="top:428px;height:2px;background:linear-gradient(90deg,#0028ff 0px,#0000ff 216.5px,#7c00ff 384.5px,#ff00ff 546.5px,#ff00c5 633.5px,#ff009a 735px)"></i><i style="top:430px;height:2px;background:linear-gradient(90deg,#0027ff 0px,#0000ff 216.5px,#8200ff 393.5px,#ff00ff 548.5px,#ff00c9 628.5px,#ff009c 735px)"></i><i style="top:432px;height:2px;background:linear-gradient(90deg,#0026ff 0px,#0000ff 217.5px,#7e00ff 389.5px,#ff00ff 550.5px,#ff00c6 636.5px,#ff009d 735px)"></i><i style="top:434px;height:2px;background:linear-gradient(90deg,#0026ff 0px,#0000ff 217.5px,#8700ff 402.5px,#ff00ff 552.5px,#ff00ca 631.5px,#ff009e 735px)"></i><i style="top:436px;height:2px;background:linear-gradient(90deg,#0025ff 0px,#0000ff 193.5px,#0000ff 217.5px,#8000ff 394.5px,#ff00ff 554.5px,#ff00c8 637.5px,#ff009f 735px)"></i><i style="top:438px;height:2px;background:linear-gradient(90deg,#0025ff 0px,#0000ff 191.5px,#0000ff 217.5px,#8f00ff 415.5px,#ff00ff 556.5px,#ff00cc 632.5px,#ff00a0 735px)"></i><i style="top:440px;height:2px;background:linear-gradient(90deg,#0024ff 0px,#0000ff 189.5px,#0000ff 218.5px,#7000ff 375.5px,#ff00ff 558.5px,#ff00c9 640.5px,#ff00a1 735px)"></i><i style="top:442px;height:2px;background:linear-gradient(90deg,#0024ff 0px,#0000ff 187.5px,#0000ff 218.5px,#8100ff 399.5px,#ff00ff 560.5px,#ff00cd 635.5px,#ff00a2 735px)"></i><i style="top:444px;height:2px;background:linear-gradient(90deg,#0023ff 0px,#0000ff 185.5px,#0000ff 218.5px,#7500ff 384.5px,#ff00ff 562.5px,#ff00cb 641.5px,#ff00a3 735px)"></i><i style="top:446px;height:2px;background:linear-gradient(90deg,#0023ff 0px,#0000ff 183.5px,#0000ff 219.5px,#7d00ff 396.5px,#ff00ff 564.5px,#ff00cf 636.5px,#ff00a4 735px)"></i><i style="top:448px;height:2px;background:linear-gradient(90deg,#0022ff 0px,#0000ff 181.5px,#0000ff 219.5px,#8200ff 404.5px,#ff00ff 566.5px,#ff00cc 644.5px,#ff00a5 735px)"></i><i style="top:450px;height:2px;background:linear-gradient(90deg,#0022ff 0px,#0000ff 179.5px,#0000ff 219.5px,#7c00ff 397.5px,#ff00ff 568.5px,#ff00d0 639.5px,#ff00a6 735px)"></i><i style="top:452px;height:2px;background:linear-gradient(90deg,#0021ff 0px,#0000ff 177.5px,#0000ff 220.5px,#8900ff 416.5px,#ff00ff 570.5px,#ff00ce 645.5px,#ff00a7 735px)"></i><i style="top:454px;height:2px;background:linear-gradient(90deg,#0021ff 0px,#0000ff 175.5px,#0000ff 220.5px,#7b00ff 398.5px,#ff00ff 572.5px,#ff00cb 653.5px,#ff00a8 735px)"></i><i style="top:456px;height:2px;background:linear-gradient(90deg,#0020ff 0px,#0000ff 173.5px,#0000ff 220.5px,#7800ff 395.5px,#ff00ff 574.5px,#ff00d0 646.5px,#ff00a9 735px)"></i><i style="top:458px;height:2px;background:linear-gradient(90deg,#0020ff 0px,#0000ff 172.5px,#0000ff 221.5px,#8700ff 417.5px,#ff00ff 576.5px,#ff00cd 654.5px,#ff00aa 735px)"></i><i style="top:460px;height:2px;background:linear-gradient(90deg,#001fff 0px,#0000ff 170.5px,#0000ff 221.5px,#7000ff 386.5px,#ff00ff 578.5px,#ff00d2 647.5px,#ff00ab 735px)"></i><i style="top:462px;height:2px;background:linear-gradient(90deg,#001fff 0px,#0000ff 168.5px,#0000ff 221.5px,#7700ff 397.5px,#ff00ff 580.5px,#ff00d0 653.5px,#ff00ac 735px)"></i><i style="top:464px;height:2px;background:linear-gradient(90deg,#001eff 0px,#0000ff 166.5px,#0000ff 222.5px,#8500ff 418.5px,#ff00ff 582.5px,#ff00d4 648.5px,#ff00ad 735px)"></i><i style="top:466px;height:2px;background:linear-gradient(90deg,#001eff 0px,#0000ff 164.5px,#0000ff 222.5px,#8200ff 415.5px,#ff00ff 584.5px,#ff00d2 654.5px,#ff00ae 735px)"></i><i style="top:468px;height:2px;background:linear-gradient(90deg,#001dff 0px,#0000ff 162.5px,#0000ff 222.5px,#8b00ff 429.5px,#ff00ff 586.5px,#ff00d6 649.5px,#ff00af 735px)"></i><i style="top:470px;height:2px;background:linear-gradient(90deg,#001dff 0px,#0000ff 160.5px,#0000ff 223.5px,#8100ff 416.5px,#ff00ff 588.5px,#ff00d4 655.5px,#ff00b0 735px)"></i><i style="top:472px;height:2px;background:linear-gradient(90deg,#001cff 0px,#0000ff 158.5px,#0000ff 223.5px,#7c00ff 410.5px,#ff00ff 590.5px,#ff00d2 661.5px,#ff00b1 735px)"></i><i style="top:474px;height:2px;background:linear-gradient(90deg,#001cff 0px,#0000ff 156.5px,#0000ff 223.5px,#8000ff 417.5px,#ff00ff 592.5px,#ff00d6 656.5px,#ff00b2 735px)"></i><i style="top:476px;height:2px;background:linear-gradient(90deg,#001bff 0px,#0000ff 154.5px,#0000ff 224.5px,#8400ff 424.5px,#ff00ff 594.5px,#ff00d5 660.5px,#ff00b3 735px)"></i><i style="top:478px;height:2px;background:linear-gradient(90deg,#001bff 0px,#0000ff 152.5px,#0000ff 224.5px,#7d00ff 415.5px,#ff00ff 596.5px,#ff00d9 655.5px,#ff00b4 735px)"></i><i style="top:480px;height:2px;background:linear-gradient(90deg,#001aff 0px,#0000ff 150.5px,#0000ff 224.5px,#8300ff 425.5px,#ff00ff 598.5px,#ff00d7 661.5px,#ff00b5 735px)"></i><i style="top:482px;height:2px;background:linear-gradient(90deg,#001aff 0px,#0000ff 148.5px,#0000ff 225.5px,#7a00ff 413.5px,#ff00ff 600.5px,#ff00d5 667.5px,#ff00b6 735px)"></i><i style="top:484px;height:2px;background:linear-gradient(90deg,#0019ff 0px,#0000ff 146.5px,#0000ff 225.5px,#8200ff 426.5px,#ff00ff 602.5px,#ff00da 660.5px,#ff00b7 735px)"></i><i style="top:486px;height:2px;background:linear-gradient(90deg,#0019ff 0px,#0000ff 144.5px,#0000ff 225.5px,#8c00ff 442.5px,#ff00ff 604.5px,#ff00d8 666.5px,#ff00b8 735px)"></i><i style="top:488px;height:2px;background:linear-gradient(90deg,#0019ff 0px,#0000ff 142.5px,#0000ff 226.5px,#7b00ff 418.5px,#ff00ff 606.5px,#ff00d6 672.5px,#ff00b9 735px)"></i><i style="top:490px;height:2px;background:linear-gradient(90deg,#0018ff 0px,#0000ff 140.5px,#0000ff 226.5px,#7d00ff 422.5px,#fe00ff 607.5px,#ff00db 665.5px,#ff00ba 735px)"></i><i style="top:492px;height:2px;background:linear-gradient(90deg,#0018ff 0px,#0000ff 138.5px,#0000ff 226.5px,#6900ff 393.5px,#fe00ff 609.5px,#ff00d9 671.5px,#ff00bc 735px)"></i><i style="top:494px;height:2px;background:linear-gradient(90deg,#0017ff 0px,#0000ff 136.5px,#0000ff 227.5px,#7a00ff 420.5px,#fe00ff 611.5px,#ff00d7 677.5px,#ff00bd 735px)"></i><i style="top:496px;height:2px;background:linear-gradient(90deg,#0017ff 0px,#0000ff 134.5px,#0000ff 227.5px,#7400ff 412.5px,#fe00ff 613.5px,#ff00dc 670.5px,#ff00be 735px)"></i><i style="top:498px;height:2px;background:linear-gradient(90deg,#0016ff 0px,#0000ff 132.5px,#0000ff 227.5px,#8100ff 433.5px,#fe00ff 615.5px,#ff00db 674.5px,#ff00bf 735px)"></i><i style="top:500px;height:2px;background:linear-gradient(90deg,#0016ff 0px,#0000ff 130.5px,#0000ff 228.5px,#7b00ff 425.5px,#fe00ff 617.5px,#ff00d9 680.5px,#ff00c0 735px)"></i><i style="top:502px;height:2px;background:linear-gradient(90deg,#0016ff 0px,#0000ff 128.5px,#0000ff 228.5px,#8200ff 437.5px,#fe00ff 619.5px,#ff00de 673.5px,#ff00c1 735px)"></i><i style="top:504px;height:2px;background:linear-gradient(90deg,#0015ff 0px,#0000ff 126.5px,#0000ff 228.5px,#7e00ff 432.5px,#fe00ff 621.5px,#ff00c2 735px)"></i><i style="top:506px;height:2px;background:linear-gradient(90deg,#0015ff 0px,#0000ff 124.5px,#0000ff 229.5px,#8300ff 441.5px,#fe00ff 623.5px,#ff00c3 735px)"></i><i style="top:508px;height:2px;background:linear-gradient(90deg,#0014ff 0px,#0000ff 122.5px,#0000ff 229.5px,#7f00ff 436.5px,#fe00ff 625.5px,#ff00c4 735px)"></i><i style="top:510px;height:2px;background:linear-gradient(90deg,#0014ff 0px,#0000ff 120.5px,#0000ff 229.5px,#8400ff 445.5px,#fe00ff 627.5px,#ff00c5 735px)"></i><i style="top:512px;height:2px;background:linear-gradient(90deg,#0014ff 0px,#0000ff 118.5px,#0000ff 230.5px,#8900ff 454.5px,#fe00ff 629.5px,#ff00c6 735px)"></i><i style="top:514px;height:2px;background:linear-gradient(90deg,#0013ff 0px,#0000ff 116.5px,#0000ff 230.5px,#7e00ff 438.5px,#fe00ff 631.5px,#ff00c7 735px)"></i><i style="top:516px;height:2px;background:linear-gradient(90deg,#0013ff 0px,#0000ff 114.5px,#0000ff 230.5px,#7c00ff 436.5px,#fe00ff 633.5px,#ff00c8 735px)"></i><i style="top:518px;height:2px;background:linear-gradient(90deg,#0012ff 0px,#0000ff 112.5px,#0000ff 231.5px,#7f00ff 442.5px,#fe00ff 635.5px,#ff00c9 735px)"></i><i style="top:520px;height:2px;background:linear-gradient(90deg,#0012ff 0px,#0000ff 110.5px,#0000ff 231.5px,#8200ff 448.5px,#fe00ff 637.5px,#ff00ca 735px)"></i><i style="top:522px;height:2px;background:linear-gradient(90deg,#0012ff 0px,#0000ff 108.5px,#0000ff 231.5px,#7b00ff 438.5px,#fe00ff 639.5px,#ff00cb 735px)"></i><i style="top:524px;height:2px;background:linear-gradient(90deg,#0011ff 0px,#0000ff 106.5px,#0000ff 232.5px,#7e00ff 444.5px,#fe00ff 641.5px,#ff00cd 735px)"></i><i style="top:526px;height:2px;background:linear-gradient(90deg,#0011ff 0px,#0000ff 104.5px,#0000ff 232.5px,#8100ff 450.5px,#fe00ff 643.5px,#ff00ce 735px)"></i><i style="top:528px;height:2px;background:linear-gradient(90deg,#0010ff 0px,#0000ff 102.5px,#0000ff 232.5px,#7700ff 435.5px,#fe00ff 645.5px,#ff00cf 735px)"></i><i style="top:530px;height:2px;background:linear-gradient(90deg,#0010ff 0px,#0000ff 100.5px,#0000ff 233.5px,#8500ff 459.5px,#fe00ff 647.5px,#ff00d0 735px)"></i><i style="top:532px;height:2px;background:linear-gradient(90deg,#0010ff 0px,#0000ff 98.5px,#0000ff 233.5px,#7500ff 434.5px,#fe00ff 649.5px,#ff00d1 735px)"></i><i style="top:534px;height:2px;background:linear-gradient(90deg,#000fff 0px,#0000ff 96.5px,#0000ff 233.5px,#7e00ff 450.5px,#fe00ff 651.5px,#ff00d2 735px)"></i><i style="top:536px;height:2px;background:linear-gradient(90deg,#000fff 0px,#0000ff 94.5px,#0000ff 234.5px,#8700ff 466.5px,#fe00ff 653.5px,#ff00d3 735px)"></i><i style="top:538px;height:2px;background:linear-gradient(90deg,#000fff 0px,#0000ff 93.5px,#0000ff 234.5px,#8200ff 459.5px,#fe00ff 655.5px,#ff00d4 735px)"></i><i style="top:540px;height:2px;background:linear-gradient(90deg,#000eff 0px,#0000ff 91.5px,#0000ff 234.5px,#9100ff 485.5px,#fe00ff 657.5px,#ff00d5 735px)"></i><i style="top:542px;height:2px;background:linear-gradient(90deg,#000eff 0px,#0000ff 89.5px,#0000ff 235.5px,#7400ff 438.5px,#fe00ff 659.5px,#ff00d6 735px)"></i><i style="top:544px;height:2px;background:linear-gradient(90deg,#000eff 0px,#0000ff 87.5px,#0000ff 235.5px,#8100ff 461.5px,#fe00ff 661.5px,#ff00d7 735px)"></i><i style="top:546px;height:2px;background:linear-gradient(90deg,#000dff 0px,#0000ff 85.5px,#0000ff 235.5px,#7800ff 447.5px,#fe00ff 663.5px,#ff00d8 735px)"></i><i style="top:548px;height:2px;background:linear-gradient(90deg,#000dff 0px,#0000ff 83.5px,#0000ff 236.5px,#7f00ff 460.5px,#fe00ff 665.5px,#ff00da 735px)"></i><i style="top:550px;height:2px;background:linear-gradient(90deg,#000dff 0px,#0000ff 81.5px,#0000ff 236.5px,#8300ff 468.5px,#fe00ff 667.5px,#ff00db 735px)"></i><i style="top:552px;height:2px;background:linear-gradient(90deg,#000cff 0px,#0000ff 79.5px,#0000ff 236.5px,#7d00ff 459.5px,#fe00ff 669.5px,#ff00dc 735px)"></i></div>
<svg style="position:absolute;left:0;top:0" width="1906" height="604"><path d="M1485.0,589.2 L1485.0,589.2 L1485.0,589.2 L1484.9,589.1 L1484.9,589.1 L1484.8,589.1 L1484.8,589.2 L1484.8,589.2 L1484.7,589.3 L1484.7,589.3 L1484.6,589.4 L1484.6,589.4 L1484.5,589.5 L1484.5,589.5 L1484.4,589.5 L1484.3,589.5 L1484.3,589.5 L1484.2,589.5 L1484.1,589.5 L1484.1,589.5 L1484.0,589.6 L1483.9,589.6 L1483.8,589.7 L1483.7,589.7 L1483.7,589.8 L1483.6,589.8 L1483.5,589.8 L1483.4,589.8 L1483.3,589.8 L1483.2,589.8 L1483.0,589.8 L1482.9,589.8 L1482.8,589.8 L1482.7,589.8 L1482.5,589.8 L1482.4,589.8 L1482.2,589.8 L1482.1,589.8 L1481.9,589.8 L1481.8,589.9 L1481.6,589.9 L1481.4,589.9 L1481.2,589.8 L1481.0,589.7 L1480.7,589.6 L1480.4,589.5 L1480.1,589.3 L1479.8,589.1 L1479.4,588.9 L1478.9,588.6 L1478.5,588.3 L1477.9,588.0 L1477.4,587.6 L1476.8,587.2 L1476.2,586.8 L1475.6,586.3 L1474.9,585.8 L1474.3,585.3 L1473.5,584.8 L1472.8,584.1 L1471.9,583.5 L1471.0,582.8 L1470.1,582.0 L1469.0,581.2 L1468.0,580.3 L1466.9,579.4 L1465.7,578.5 L1464.5,577.5 L1463.3,576.4 L1462.1,575.3 L1460.7,574.2 L1459.4,573.0 L1457.9,571.8 L1456.4,570.6 L1454.9,569.3 L1453.3,568.0 L1451.6,566.6 L1449.9,565.2 L1448.1,563.6 L1446.1,562.0 L1444.1,560.4 L1441.9,558.6 L1439.7,556.8 L1437.5,555.0 L1435.1,553.0 L1432.7,551.0 L1430.2,549.0 L1427.7,546.9 L1425.1,544.7 L1422.4,542.4 L1419.5,540.0 L1416.6,537.4 L1413.6,534.8 L1410.4,532.0 L1407.2,529.1 L1403.9,526.0 L1400.4,522.7 L1396.9,519.3 L1393.3,515.9 L1389.6,512.2 L1385.8,508.3 L1381.7,504.1 L1377.4,499.3 L1372.8,494.1 L1368.0,488.6 L1363.0,482.6 L1357.8,476.3 L1352.4,469.6 L1347.0,462.5 L1341.3,455.1 L1335.5,447.2 L1329.5,439.0 L1323.4,430.4 L1317.2,421.5 L1311.0,412.2 L1304.6,402.6 L1298.1,392.5 L1291.5,382.0 L1284.9,371.3 L1278.4,360.5 L1271.9,349.6 L1265.5,338.6 L1259.0,327.3 L1252.5,315.9 L1246.2,304.5 L1240.1,293.1 L1234.3,281.9 L1228.9,270.8 L1223.6,259.7 L1218.6,248.6 L1213.8,237.7 L1209.2,227.1 L1205.0,216.9 L1201.0,207.0 L1197.3,197.4 L1193.8,188.0 L1190.6,179.0 L1187.7,170.3 L1185.1,162.1 L1182.7,154.4 L1180.6,147.0 L1178.8,140.1 L1177.3,133.5 L1175.9,127.3 L1174.8,121.4 L1173.8,115.8 L1173.1,110.7 L1172.6,105.9 L1172.3,101.4 L1172.2,97.1 L1172.3,93.0 L1172.5,89.2 L1172.9,85.6 L1173.5,82.3 L1174.2,79.2 L1175.1,76.3 L1176.2,73.5 L1177.4,71.0 L1178.8,68.7 L1180.3,66.5 L1181.9,64.6 L1183.7,62.8 L1185.5,61.2 L1187.5,59.7 L1189.6,58.5 L1191.8,57.4 L1194.1,56.5 L1196.4,55.6 L1198.8,54.9 L1201.3,54.2 L1203.8,53.7 L1206.5,53.3 L1209.1,53.0 L1211.9,52.8 L1214.6,52.5 L1217.4,52.3 L1220.2,52.2 L1223.1,52.1 L1226.0,52.0 L1228.9,52.0 L1231.8,52.0 L1234.7,51.9 L1237.6,52.0 L1240.5,52.0 L1243.4,52.0 L1246.3,52.1 L1249.3,52.2 L1252.3,52.3 L1255.3,52.4 L1258.3,52.5 L1261.3,52.7 L1264.4,52.8 L1267.5,53.0 L1270.7,53.2 L1273.9,53.4 L1277.2,53.7 L1280.4,53.9 L1283.8,54.2 L1287.2,54.4 L1290.6,54.7 L1294.1,55.0 L1297.6,55.4 L1301.2,55.7 L1304.8,56.0 L1308.5,56.4 L1312.3,56.7 L1316.1,57.1 L1320.0,57.5 L1323.9,57.9 L1327.9,58.3 L1332.0,58.7 L1336.1,59.2 L1340.4,59.6 L1344.7,60.1 L1349.0,60.6 L1353.5,61.0 L1358.0,61.5 L1362.6,62.0 L1367.3,62.6 L1372.0,63.1 L1376.8,63.6 L1381.8,64.2 L1386.8,64.7 L1391.9,65.3 L1397.0,65.9 L1402.3,66.5 L1407.7,67.1 L1413.1,67.7 L1418.6,68.3 L1424.2,69.0 L1429.9,69.6 L1435.7,70.3 L1441.6,71.0 L1447.6,71.7 L1453.6,72.4 L1459.8,73.1 L1466.0,73.8 L1472.3,74.5 L1478.7,75.2 L1485.2,76.0 L1491.8,76.8 L1498.5,77.5 L1505.2,78.3 L1512.0,79.1 L1518.9,79.9 L1525.9,80.7 L1533.0,81.5 L1540.1,82.3 L1547.3,83.1 L1554.5,84.0 L1561.8,84.8 L1569.2,85.6 L1576.5,86.5 L1583.9,87.3 L1591.4,88.2 L1598.9,89.1 L1606.4,89.9 L1613.9,90.8 L1621.3,91.7 L1628.6,92.5 L1635.9,93.3 L1643.1,94.2 L1650.3,95.0 L1657.5,95.8 L1664.6,96.6 L1671.8,97.5 L1678.9,98.3 L1686.1,99.1 L1693.1,99.9 L1700.1,100.7 L1706.8,101.5 L1713.5,102.2 L1720.1,103.0 L1726.5,103.7 L1732.8,104.4 L1739.0,105.2 L1745.1,105.8 L1751.0,106.5 L1756.9,107.2 L1762.6,107.9 L1768.2,108.5 L1773.6,109.1 L1778.9,109.8 L1784.0,110.3 L1789.0,110.9 L1793.9,111.5 L1798.6,112.0 L1803.2,112.6 L1807.7,113.1 L1812.0,113.6 L1816.2,114.0 L1820.2,114.5 L1824.2,115.0 L1828.0,115.4 L1831.7,115.8 L1835.2,116.2 L1838.3,116.6 L1841.4,116.9 L1844.5,117.3 L1848.0,117.7 L1852.0,118.2 L1856.9,118.7 L1862.4,119.4 L1868.2,120.0 L1874.1,120.7 L1879.6,121.3 L1884.5,121.9 L1888.9,122.4 L1892.8,122.9 L1896.5,123.3 L1899.9,123.7 L1903.0,124.0 L1905.9,124.3 L1908.6,124.7 L1910.9,124.9 L1912.9,125.2 L1914.8,125.4 L1916.7,125.6 L1918.6,125.8 L1920.7,126.0 L1922.7,126.3 L1924.7,126.5 L1926.6,126.7 L1928.3,126.9 L1929.7,127.1 L1930.8,127.2 L1931.8,127.3 L1932.5,127.4 L1933.1,127.5 L1933.6,127.5 L1934.0,127.6 Z M1722.5,112.1 L1323.6,74.8 L1385.4,456.0 Z" fill="#000" fill-opacity="0.4" fill-rule="evenodd"/></svg>
<div style="left:1165px;top:604px;width:6px;height:2px;background:#8c8c8c"></div>
<div class="t" style="left:1154.31px;top:598.23px;font-size:17.44px;line-height:17.44px;color:#ddd;transform:scaleX(1.0500);">0</div>
<div style="left:1170px;top:605px;width:2px;height:6px;background:#8c8c8c"></div>
<div class="t" style="left:1165.41px;top:615.43px;font-size:17.44px;line-height:17.44px;color:#ddd;transform:scaleX(1.0500);">0</div>
<div style="left:1165px;top:557px;width:6px;height:2px;background:#8c8c8c"></div>
<div class="t" style="left:1128.86px;top:551.12px;font-size:17.44px;line-height:17.44px;color:#ddd;transform:scaleX(1.0500);">0.05</div>
<div style="left:1231px;top:605px;width:2px;height:6px;background:#8c8c8c"></div>
<div class="t" style="left:1213.91px;top:615.43px;font-size:17.44px;line-height:17.44px;color:#ddd;transform:scaleX(1.0500);">0.05</div>
<div style="left:1165px;top:510px;width:6px;height:2px;background:#8c8c8c"></div>
<div class="t" style="left:1139.04px;top:504.01px;font-size:17.44px;line-height:17.44px;color:#ddd;transform:scaleX(1.0500);">0.1</div>
<div style="left:1292px;top:605px;width:2px;height:6px;background:#8c8c8c"></div>
<div class="t" style="left:1280.24px;top:615.43px;font-size:17.44px;line-height:17.44px;color:#ddd;transform:scaleX(1.0500);">0.1</div>
<div style="left:1165px;top:462px;width:6px;height:2px;background:#8c8c8c"></div>
<div class="t" style="left:1128.86px;top:456.90px;font-size:17.44px;line-height:17.44px;color:#ddd;transform:scaleX(1.0500);">0.15</div>
<div style="left:1353px;top:605px;width:2px;height:6px;background:#8c8c8c"></div>
<div class="t" style="left:1336.38px;top:615.43px;font-size:17.44px;line-height:17.44px;color:#ddd;transform:scaleX(1.0500);">0.15</div>
<div style="left:1165px;top:415px;width:6px;height:2px;background:#8c8c8c"></div>
<div class="t" style="left:1139.04px;top:409.79px;font-size:17.44px;line-height:17.44px;color:#ddd;transform:scaleX(1.0500);">0.2</div>
<div style="left:1414px;top:605px;width:2px;height:6px;background:#8c8c8c"></div>
<div class="t" style="left:1402.71px;top:615.43px;font-size:17.44px;line-height:17.44px;color:#ddd;transform:scaleX(1.0500);">0.2</div>
<div style="left:1165px;top:368px;width:6px;height:2px;background:#8c8c8c"></div>
<div class="t" style="left:1128.86px;top:362.68px;font-size:17.44px;line-height:17.44px;color:#ddd;transform:scaleX(1.0500);">0.25</div>
<div style="left:1476px;top:605px;width:2px;height:6px;background:#8c8c8c"></div>
<div class="t" style="left:1458.85px;top:615.43px;font-size:17.44px;line-height:17.44px;color:#ddd;transform:scaleX(1.0500);">0.25</div>
<div style="left:1165px;top:321px;width:6px;height:2px;background:#8c8c8c"></div>
<div class="t" style="left:1139.04px;top:315.57px;font-size:17.44px;line-height:17.44px;color:#ddd;transform:scaleX(1.0500);">0.3</div>
<div style="left:1537px;top:605px;width:2px;height:6px;background:#8c8c8c"></div>
<div class="t" style="left:1525.18px;top:615.43px;font-size:17.44px;line-height:17.44px;color:#ddd;transform:scaleX(1.0500);">0.3</div>
<div style="left:1165px;top:274px;width:6px;height:2px;background:#8c8c8c"></div>
<div class="t" style="left:1128.86px;top:268.46px;font-size:17.44px;line-height:17.44px;color:#ddd;transform:scaleX(1.0500);">0.35</div>
<div style="left:1598px;top:605px;width:2px;height:6px;background:#8c8c8c"></div>
<div class="t" style="left:1581.32px;top:615.43px;font-size:17.44px;line-height:17.44px;color:#ddd;transform:scaleX(1.0500);">0.35</div>
<div style="left:1165px;top:227px;width:6px;height:2px;background:#8c8c8c"></div>
<div class="t" style="left:1139.04px;top:221.35px;font-size:17.44px;line-height:17.44px;color:#ddd;transform:scaleX(1.0500);">0.4</div>
<div style="left:1659px;top:605px;width:2px;height:6px;background:#8c8c8c"></div>
<div class="t" style="left:1647.65px;top:615.43px;font-size:17.44px;line-height:17.44px;color:#ddd;transform:scaleX(1.0500);">0.4</div>
<div style="left:1165px;top:180px;width:6px;height:2px;background:#8c8c8c"></div>
<div class="t" style="left:1128.86px;top:174.24px;font-size:17.44px;line-height:17.44px;color:#ddd;transform:scaleX(1.0500);">0.45</div>
<div style="left:1721px;top:605px;width:2px;height:6px;background:#8c8c8c"></div>
<div class="t" style="left:1703.79px;top:615.43px;font-size:17.44px;line-height:17.44px;color:#ddd;transform:scaleX(1.0500);">0.45</div>
<div style="left:1165px;top:133px;width:6px;height:2px;background:#8c8c8c"></div>
<div class="t" style="left:1139.04px;top:127.13px;font-size:17.44px;line-height:17.44px;color:#ddd;transform:scaleX(1.0500);">0.5</div>
<div style="left:1782px;top:605px;width:2px;height:6px;background:#8c8c8c"></div>
<div class="t" style="left:1770.12px;top:615.43px;font-size:17.44px;line-height:17.44px;color:#ddd;transform:scaleX(1.0500);">0.5</div>
<div style="left:1165px;top:86px;width:6px;height:2px;background:#8c8c8c"></div>
<div class="t" style="left:1128.86px;top:80.02px;font-size:17.44px;line-height:17.44px;color:#ddd;transform:scaleX(1.0500);">0.55</div>
<div style="left:1843px;top:605px;width:2px;height:6px;background:#8c8c8c"></div>
<div class="t" style="left:1826.26px;top:615.43px;font-size:17.44px;line-height:17.44px;color:#ddd;transform:scaleX(1.0500);">0.55</div>
<div style="left:1170px;top:604px;width:737px;height:2px;background:#8c8c8c"></div>
<div style="left:1170px;top:37px;width:2px;height:568px;background:#8c8c8c"></div>
<div style="left:1170px;top:37px;width:737px;height:2px;background:#8c8c8c"></div>
<div style="left:1906px;top:37px;width:2px;height:569px;background:#8c8c8c"></div>
<svg style="position:absolute;left:0;top:0;overflow:visible" width="1920" height="1163"><rect x="1314.8" y="65.5" width="15.5" height="15.5" fill="none" stroke="#f4f4f4" stroke-width="1.7"/><rect x="1329.0" y="79.7" width="15.5" height="15.5" fill="none" stroke="#f4f4f4" stroke-width="1.7"/><rect x="1343.2" y="93.8" width="15.5" height="15.5" fill="none" stroke="#f4f4f4" stroke-width="1.7"/><rect x="1360.5" y="110.5" width="15.5" height="15.5" fill="none" stroke="#f4f4f4" stroke-width="1.7"/><rect x="1380.5" y="129.9" width="15.5" height="15.5" fill="none" stroke="#f4f4f4" stroke-width="1.7"/><rect x="1412.0" y="74.5" width="15.5" height="15.5" fill="none" stroke="#f4f4f4" stroke-width="1.7"/><rect x="1410.2" y="88.0" width="15.5" height="15.5" fill="none" stroke="#f4f4f4" stroke-width="1.7"/><rect x="1409.5" y="101.5" width="15.5" height="15.5" fill="none" stroke="#f4f4f4" stroke-width="1.7"/><rect x="1408.2" y="116.3" width="15.5" height="15.5" fill="none" stroke="#f4f4f4" stroke-width="1.7"/><rect x="1407.0" y="133.8" width="15.5" height="15.5" fill="none" stroke="#f4f4f4" stroke-width="1.7"/><rect x="1331.5" y="166.7" width="15.5" height="15.5" fill="none" stroke="#f4f4f4" stroke-width="1.7"/><rect x="1345.2" y="163.4" width="15.5" height="15.5" fill="none" stroke="#f4f4f4" stroke-width="1.7"/><rect x="1360.5" y="160.2" width="15.5" height="15.5" fill="none" stroke="#f4f4f4" stroke-width="1.7"/><rect x="1375.5" y="157.7" width="15.5" height="15.5" fill="none" stroke="#f4f4f4" stroke-width="1.7"/><rect x="1390.8" y="155.8" width="15.5" height="15.5" fill="none" stroke="#f4f4f4" stroke-width="1.7"/><rect x="1460.7" y="145.2" width="15.5" height="15.5" fill="none" stroke="#f4f4f4" stroke-width="1.7"/><rect x="1521.7" y="133.8" width="15.5" height="15.5" fill="none" stroke="#f4f4f4" stroke-width="1.7"/><rect x="1577.5" y="126.1" width="15.5" height="15.5" fill="none" stroke="#f4f4f4" stroke-width="1.7"/><rect x="1640.8" y="115.0" width="15.5" height="15.5" fill="none" stroke="#f4f4f4" stroke-width="1.7"/><rect x="1714.2" y="102.5" width="15.5" height="15.5" fill="none" stroke="#f4f4f4" stroke-width="1.7"/><rect x="1424.5" y="172.8" width="15.5" height="15.5" fill="none" stroke="#f4f4f4" stroke-width="1.7"/><rect x="1446.5" y="195.2" width="15.5" height="15.5" fill="none" stroke="#f4f4f4" stroke-width="1.7"/><rect x="1468.5" y="218.8" width="15.5" height="15.5" fill="none" stroke="#f4f4f4" stroke-width="1.7"/><rect x="1497.8" y="248.2" width="15.5" height="15.5" fill="none" stroke="#f4f4f4" stroke-width="1.7"/><rect x="1536.0" y="284.6" width="15.5" height="15.5" fill="none" stroke="#f4f4f4" stroke-width="1.7"/><rect x="1401.0" y="189.2" width="15.5" height="15.5" fill="none" stroke="#f4f4f4" stroke-width="1.7"/><rect x="1398.0" y="230.7" width="15.5" height="15.5" fill="none" stroke="#f4f4f4" stroke-width="1.7"/><rect x="1393.0" y="282.6" width="15.5" height="15.5" fill="none" stroke="#f4f4f4" stroke-width="1.7"/><rect x="1387.2" y="348.8" width="15.5" height="15.5" fill="none" stroke="#f4f4f4" stroke-width="1.7"/><rect x="1377.8" y="446.9" width="15.5" height="15.5" fill="none" stroke="#f4f4f4" stroke-width="1.7"/><circle cx="1346.2" cy="81.2" r="5" fill="#00b000" stroke="#1a1a1a" stroke-width="1.3"/><circle cx="1358.9" cy="94.9" r="5" fill="#48b248" stroke="#1a1a1a" stroke-width="1.3"/><circle cx="1369.6" cy="108.7" r="5" fill="#66ae66" stroke="#1a1a1a" stroke-width="1.3"/><circle cx="1380.6" cy="124.5" r="5" fill="#80b080" stroke="#1a1a1a" stroke-width="1.3"/><circle cx="1396.4" cy="142.2" r="5" fill="#9cb49c" stroke="#1a1a1a" stroke-width="1.3"/><circle cx="1430.9" cy="90.2" r="5" fill="#c0bc08" stroke="#1a1a1a" stroke-width="1.3"/><circle cx="1427.6" cy="104.4" r="5" fill="#bab452" stroke="#1a1a1a" stroke-width="1.3"/><circle cx="1424.4" cy="115.8" r="5" fill="#b8b46e" stroke="#1a1a1a" stroke-width="1.3"/><circle cx="1420.9" cy="129.6" r="5" fill="#b8b486" stroke="#1a1a1a" stroke-width="1.3"/><circle cx="1416.4" cy="145.0" r="5" fill="#bcb89c" stroke="#1a1a1a" stroke-width="1.3"/><circle cx="1351.2" cy="176.6" r="5" fill="#10b0b0" stroke="#1a1a1a" stroke-width="1.3"/><circle cx="1363.2" cy="173.1" r="5" fill="#50b0b0" stroke="#1a1a1a" stroke-width="1.3"/><circle cx="1375.7" cy="169.6" r="5" fill="#70b0b0" stroke="#1a1a1a" stroke-width="1.3"/><circle cx="1388.3" cy="168.6" r="5" fill="#88b0b0" stroke="#1a1a1a" stroke-width="1.3"/><circle cx="1399.3" cy="165.1" r="5" fill="#a0b4b4" stroke="#1a1a1a" stroke-width="1.3"/><circle cx="1626.4" cy="115.5" r="5" fill="#b80000" stroke="#1a1a1a" stroke-width="1.3"/><circle cx="1580.6" cy="124.4" r="5" fill="#b84040" stroke="#1a1a1a" stroke-width="1.3"/><circle cx="1538.8" cy="134.5" r="5" fill="#b85858" stroke="#1a1a1a" stroke-width="1.3"/><circle cx="1497.8" cy="143.1" r="5" fill="#b87070" stroke="#1a1a1a" stroke-width="1.3"/><circle cx="1457.5" cy="153.0" r="5" fill="#b88888" stroke="#1a1a1a" stroke-width="1.3"/><circle cx="1484.1" cy="252.9" r="5" fill="#b800b8" stroke="#1a1a1a" stroke-width="1.3"/><circle cx="1465.2" cy="229.9" r="5" fill="#b850b8" stroke="#1a1a1a" stroke-width="1.3"/><circle cx="1449.7" cy="209.3" r="5" fill="#b870b8" stroke="#1a1a1a" stroke-width="1.3"/><circle cx="1438.7" cy="195.5" r="5" fill="#b888b8" stroke="#1a1a1a" stroke-width="1.3"/><circle cx="1424.6" cy="177.6" r="5" fill="#b8a0b8" stroke="#1a1a1a" stroke-width="1.3"/><circle cx="1359.0" cy="368.5" r="5" fill="#1010c0" stroke="#1a1a1a" stroke-width="1.3"/><circle cx="1375.7" cy="306.5" r="5" fill="#5050b8" stroke="#1a1a1a" stroke-width="1.3"/><circle cx="1386.5" cy="260.7" r="5" fill="#6868b8" stroke="#1a1a1a" stroke-width="1.3"/><circle cx="1396.4" cy="224.7" r="5" fill="#8080b8" stroke="#1a1a1a" stroke-width="1.3"/><circle cx="1405.4" cy="191.9" r="5" fill="#9c9cb8" stroke="#1a1a1a" stroke-width="1.3"/><rect x="1404.7" y="154.7" width="15" height="15" fill="none" stroke="#111" stroke-width="2.1"/><circle cx="1412.2" cy="162.2" r="5.5" fill="#fff" stroke="#222" stroke-width="1.5"/></svg>
<div style="left:1652px;top:426px;width:250px;height:172px;background:#2a2a2a"></div>
<div style="left:1655px;top:429px;width:244px;height:167px;box-sizing:border-box;border:1px solid #9a9a9a;overflow:hidden"></div>
<svg style="position:absolute;left:1656px;top:430px" width="242" height="165">
<defs>
<linearGradient id="ib" x1="0" y1="0" x2="1" y2="1"><stop offset="0" stop-color="#a0ff00"/><stop offset="0.35" stop-color="#e0ff00"/><stop offset="0.55" stop-color="#ffff00"/><stop offset="0.8" stop-color="#ffc000"/><stop offset="1" stop-color="#ff9a00"/></linearGradient>
<linearGradient id="ia" x1="0" y1="0" x2="1" y2="1"><stop offset="0" stop-color="#4c9600"/><stop offset="0.5" stop-color="#939600"/><stop offset="1" stop-color="#965c00"/></linearGradient>
</defs>
<rect width="242" height="165" fill="url(#ib)"/>
<polygon points="0,0 242,0 242,148 0,18" fill="url(#ia)"/>
<rect x="112" y="74" width="16" height="16" fill="none" stroke="#f0f0f0" stroke-width="2"/>
<circle cx="121.5" cy="152.5" r="5" fill="#bcbc00" stroke="#1a1a1a" stroke-width="1.5"/>
</svg>
<div class="t" style="left:57.40px;top:653.59px;font-size:35.32px;line-height:35.32px;color:#eee;transform:scaleX(0.9583);">Avg dE2000: 4.84</div>
<div class="t" style="left:43.20px;top:700.39px;font-size:35.32px;line-height:35.32px;color:#eee;transform:scaleX(0.9744);">Max dE2000: 14.03</div>
<div class="t" style="left:15.60px;top:756.51px;font-size:32.70px;line-height:32.70px;color:#eee;transform:scaleX(1.0481);">Current Reading</div>
<div class="t" style="left:15.40px;top:801.50px;font-size:28.34px;line-height:28.34px;color:#eee;transform:scaleX(1.0033);">x: 0.4197</div>
<div class="t" style="left:195.50px;top:801.50px;font-size:28.34px;line-height:28.34px;color:#eee;transform:scaleX(1.0205);">y: 0.4769</div>
<div class="t" style="left:15.40px;top:846.50px;font-size:28.34px;line-height:28.34px;color:#eee;transform:scaleX(1.0062);">fL: 31.56</div>
<div class="t" style="left:15.40px;top:887.00px;font-size:28.34px;line-height:28.34px;color:#eee;transform:scaleX(1.0560);">cd/m²: 108.15</div>
<div class="t" style="left:488.45px;top:671.21px;font-size:15.70px;line-height:15.70px;color:#ddd;">RGB Balance</div>
<div style="left:410px;top:690px;width:287px;height:207px;background:#232323"></div>
<div style="left:410px;top:724px;width:288px;height:2px;background:#8c8c8c"></div>
<div style="left:404px;top:724px;width:6px;height:2px;background:#8c8c8c"></div>
<div class="t" style="left:373.09px;top:719.47px;font-size:16.57px;line-height:16.57px;color:#ddd;transform:scaleX(1.1000);">120</div>
<div style="left:410px;top:794px;width:288px;height:2px;background:#8c8c8c"></div>
<div style="left:404px;top:794px;width:6px;height:2px;background:#8c8c8c"></div>
<div class="t" style="left:373.09px;top:788.47px;font-size:16.57px;line-height:16.57px;color:#ddd;transform:scaleX(1.1000);">100</div>
<div style="left:410px;top:863px;width:288px;height:2px;background:#8c8c8c"></div>
<div style="left:404px;top:863px;width:6px;height:2px;background:#8c8c8c"></div>
<div class="t" style="left:383.23px;top:857.77px;font-size:16.57px;line-height:16.57px;color:#ddd;transform:scaleX(1.1000);">80</div>
<div style="left:409px;top:689px;width:289px;height:2px;background:#8c8c8c"></div>
<div style="left:409px;top:689px;width:2px;height:216px;background:#8c8c8c"></div>
<div style="left:696px;top:689px;width:2px;height:216px;background:#8c8c8c"></div>
<div style="left:409px;top:896px;width:289px;height:2px;background:#8c8c8c"></div>
<div style="left:437px;top:791px;width:77px;height:106px;background:#000"></div>
<div style="left:438px;top:792px;width:75px;height:105px;background:linear-gradient(#ff5a5a,#ff2020 40%,#ff0000)"></div>
<div style="left:514px;top:808px;width:77px;height:89px;background:#000"></div>
<div style="left:515px;top:809px;width:75px;height:88px;background:linear-gradient(#50b050,#10901a 40%,#008000)"></div>
<div style="left:590px;top:720px;width:77px;height:177px;background:#000"></div>
<div style="left:591px;top:721px;width:75px;height:176px;background:linear-gradient(#6060ff,#2020ff 40%,#0000ff)"></div>
<div class="t" style="left:532.61px;top:901.97px;font-size:16.57px;line-height:16.57px;color:#ddd;">100%</div>
<div style="left:722px;top:655px;width:22px;height:32px;background:#000"></div>
<div style="left:744px;top:655px;width:808px;height:16px;background:#2f2f2f"></div>
<div style="left:744px;top:671px;width:808px;height:16px;background:#141414"></div>
<div class="t" style="left:936.60px;top:664.31px;font-size:16.76px;line-height:16.76px;color:#f4f4f4;transform:scaleX(1.4700);">20%</div>
<div class="t" style="left:1061.30px;top:664.31px;font-size:16.76px;line-height:16.76px;color:#f4f4f4;transform:scaleX(1.4700);">40%</div>
<div class="t" style="left:1186.00px;top:664.31px;font-size:16.76px;line-height:16.76px;color:#f4f4f4;transform:scaleX(1.4700);">60%</div>
<div class="t" style="left:1310.70px;top:664.31px;font-size:16.76px;line-height:16.76px;color:#f4f4f4;transform:scaleX(1.4700);">80%</div>
<div class="t" style="left:1435.40px;top:664.31px;font-size:16.76px;line-height:16.76px;color:#f4f4f4;transform:scaleX(1.4700);">100%</div>
<div style="left:722px;top:687px;width:22px;height:30px;background:#262626"></div>
<div style="left:744px;top:687px;width:808px;height:30px;background:#3e3e3e"></div>
<div class="t" style="left:752.00px;top:695.03px;font-size:17.44px;line-height:17.44px;color:#f4f4f4;transform:scaleX(1.4300);">x: CIE31</div>
<div class="t" style="left:936.60px;top:695.03px;font-size:17.44px;line-height:17.44px;color:#f4f4f4;transform:scaleX(1.5000);">0.3333</div>
<div class="t" style="left:1061.30px;top:695.03px;font-size:17.44px;line-height:17.44px;color:#f4f4f4;transform:scaleX(1.5000);">0.3560</div>
<div class="t" style="left:1186.00px;top:695.03px;font-size:17.44px;line-height:17.44px;color:#f4f4f4;transform:scaleX(1.5000);">0.3762</div>
<div class="t" style="left:1310.70px;top:695.03px;font-size:17.44px;line-height:17.44px;color:#f4f4f4;transform:scaleX(1.5000);">0.3959</div>
<div class="t" style="left:1435.40px;top:695.03px;font-size:17.44px;line-height:17.44px;color:#f4f4f4;transform:scaleX(1.5000);">0.4197</div>
<div style="left:722px;top:717px;width:22px;height:29px;background:#222"></div>
<div style="left:744px;top:717px;width:808px;height:29px;background:#808080"></div>
<div class="t" style="left:752.00px;top:724.63px;font-size:17.44px;line-height:17.44px;color:#f4f4f4;transform:scaleX(1.4300);">y: CIE31</div>
<div class="t" style="left:936.60px;top:724.63px;font-size:17.44px;line-height:17.44px;color:#f4f4f4;transform:scaleX(1.5000);">0.3576</div>
<div class="t" style="left:1061.30px;top:724.63px;font-size:17.44px;line-height:17.44px;color:#f4f4f4;transform:scaleX(1.5000);">0.3889</div>
<div class="t" style="left:1186.00px;top:724.63px;font-size:17.44px;line-height:17.44px;color:#f4f4f4;transform:scaleX(1.5000);">0.4169</div>
<div class="t" style="left:1310.70px;top:724.63px;font-size:17.44px;line-height:17.44px;color:#f4f4f4;transform:scaleX(1.5000);">0.4441</div>
<div class="t" style="left:1435.40px;top:724.63px;font-size:17.44px;line-height:17.44px;color:#f4f4f4;transform:scaleX(1.5000);">0.4769</div>
<div style="left:722px;top:746px;width:22px;height:30px;background:#262626"></div>
<div style="left:744px;top:746px;width:808px;height:30px;background:#3e3e3e"></div>
<div class="t" style="left:752.00px;top:754.23px;font-size:17.44px;line-height:17.44px;color:#f4f4f4;transform:scaleX(1.4300);">Y</div>
<div class="t" style="left:936.60px;top:754.23px;font-size:17.44px;line-height:17.44px;color:#f4f4f4;transform:scaleX(1.5000);">121.6964</div>
<div class="t" style="left:1061.30px;top:754.23px;font-size:17.44px;line-height:17.44px;color:#f4f4f4;transform:scaleX(1.5000);">117.4824</div>
<div class="t" style="left:1186.00px;top:754.23px;font-size:17.44px;line-height:17.44px;color:#f4f4f4;transform:scaleX(1.5000);">114.4052</div>
<div class="t" style="left:1310.70px;top:754.23px;font-size:17.44px;line-height:17.44px;color:#f4f4f4;transform:scaleX(1.5000);">111.8198</div>
<div class="t" style="left:1435.40px;top:754.23px;font-size:17.44px;line-height:17.44px;color:#f4f4f4;transform:scaleX(1.5000);">108.1464</div>
<div style="left:722px;top:776px;width:22px;height:29px;background:#222"></div>
<div style="left:744px;top:776px;width:808px;height:29px;background:#808080"></div>
<div class="t" style="left:752.00px;top:783.83px;font-size:17.44px;line-height:17.44px;color:#f4f4f4;transform:scaleX(1.4300);">Target x:CIE31</div>
<div class="t" style="left:936.60px;top:783.83px;font-size:17.44px;line-height:17.44px;color:#f4f4f4;transform:scaleX(1.5000);">0.3344</div>
<div class="t" style="left:1061.30px;top:783.83px;font-size:17.44px;line-height:17.44px;color:#f4f4f4;transform:scaleX(1.5000);">0.3564</div>
<div class="t" style="left:1186.00px;top:783.83px;font-size:17.44px;line-height:17.44px;color:#f4f4f4;transform:scaleX(1.5000);">0.3773</div>
<div class="t" style="left:1310.70px;top:783.83px;font-size:17.44px;line-height:17.44px;color:#f4f4f4;transform:scaleX(1.5000);">0.3969</div>
<div class="t" style="left:1435.40px;top:783.83px;font-size:17.44px;line-height:17.44px;color:#f4f4f4;transform:scaleX(1.5000);">0.4193</div>
<div style="left:722px;top:805px;width:22px;height:30px;background:#262626"></div>
<div style="left:744px;top:805px;width:808px;height:30px;background:#3e3e3e"></div>
<div class="t" style="left:752.00px;top:813.43px;font-size:17.44px;line-height:17.44px;color:#f4f4f4;transform:scaleX(1.4300);">Target y:CIE31</div>
<div class="t" style="left:936.60px;top:813.43px;font-size:17.44px;line-height:17.44px;color:#f4f4f4;transform:scaleX(1.5000);">0.3648</div>
<div class="t" style="left:1061.30px;top:813.43px;font-size:17.44px;line-height:17.44px;color:#f4f4f4;transform:scaleX(1.5000);">0.4013</div>
<div class="t" style="left:1186.00px;top:813.43px;font-size:17.44px;line-height:17.44px;color:#f4f4f4;transform:scaleX(1.5000);">0.4358</div>
<div class="t" style="left:1310.70px;top:813.43px;font-size:17.44px;line-height:17.44px;color:#f4f4f4;transform:scaleX(1.5000);">0.4682</div>
<div class="t" style="left:1435.40px;top:813.43px;font-size:17.44px;line-height:17.44px;color:#f4f4f4;transform:scaleX(1.5000);">0.5053</div>
<div style="left:722px;top:835px;width:22px;height:30px;background:#222"></div>
<div style="left:744px;top:835px;width:808px;height:30px;background:#808080"></div>
<div class="t" style="left:752.00px;top:843.03px;font-size:17.44px;line-height:17.44px;color:#f4f4f4;transform:scaleX(1.4300);">Target Y</div>
<div class="t" style="left:936.60px;top:843.03px;font-size:17.44px;line-height:17.44px;color:#f4f4f4;transform:scaleX(1.5000);">124.7915</div>
<div class="t" style="left:1061.30px;top:843.03px;font-size:17.44px;line-height:17.44px;color:#f4f4f4;transform:scaleX(1.5000);">122.6010</div>
<div class="t" style="left:1186.00px;top:843.03px;font-size:17.44px;line-height:17.44px;color:#f4f4f4;transform:scaleX(1.5000);">120.9180</div>
<div class="t" style="left:1310.70px;top:843.03px;font-size:17.44px;line-height:17.44px;color:#f4f4f4;transform:scaleX(1.5000);">119.5971</div>
<div class="t" style="left:1435.40px;top:843.03px;font-size:17.44px;line-height:17.44px;color:#f4f4f4;transform:scaleX(1.5000);">118.3201</div>
<div style="left:722px;top:865px;width:22px;height:29px;background:#262626"></div>
<div style="left:744px;top:865px;width:808px;height:29px;background:#3e3e3e"></div>
<div class="t" style="left:752.00px;top:872.63px;font-size:17.44px;line-height:17.44px;color:#f4f4f4;transform:scaleX(1.4300);">ΔE 2000</div>
<div class="t" style="left:936.60px;top:872.63px;font-size:17.44px;line-height:17.44px;color:#f4f4f4;transform:scaleX(1.5000);">2.8253</div>
<div class="t" style="left:1061.30px;top:872.63px;font-size:17.44px;line-height:17.44px;color:#f4f4f4;transform:scaleX(1.5000);">3.3688</div>
<div class="t" style="left:1186.00px;top:872.63px;font-size:17.44px;line-height:17.44px;color:#f4f4f4;transform:scaleX(1.5000);">3.9494</div>
<div class="t" style="left:1310.70px;top:872.63px;font-size:17.44px;line-height:17.44px;color:#f4f4f4;transform:scaleX(1.5000);">4.3692</div>
<div class="t" style="left:1435.40px;top:872.63px;font-size:17.44px;line-height:17.44px;color:#f4f4f4;transform:scaleX(1.5000);">4.8364</div>
<div style="left:722px;top:894px;width:22px;height:30px;background:#222"></div>
<div style="left:744px;top:894px;width:808px;height:30px;background:#808080"></div>
<div class="t" style="left:752.00px;top:902.23px;font-size:17.44px;line-height:17.44px;color:#f4f4f4;transform:scaleX(1.4300);">ΔE ITP</div>
<div class="t" style="left:936.60px;top:902.23px;font-size:17.44px;line-height:17.44px;color:#f4f4f4;transform:scaleX(1.5000);">3.4835</div>
<div class="t" style="left:1061.30px;top:902.23px;font-size:17.44px;line-height:17.44px;color:#f4f4f4;transform:scaleX(1.5000);">6.2148</div>
<div class="t" style="left:1186.00px;top:902.23px;font-size:17.44px;line-height:17.44px;color:#f4f4f4;transform:scaleX(1.5000);">9.4643</div>
<div class="t" style="left:1310.70px;top:902.23px;font-size:17.44px;line-height:17.44px;color:#f4f4f4;transform:scaleX(1.5000);">12.7341</div>
<div class="t" style="left:1435.40px;top:902.23px;font-size:17.44px;line-height:17.44px;color:#f4f4f4;transform:scaleX(1.5000);">17.2611</div>
<div style="left:0px;top:1101px;width:1920px;height:62px;background:linear-gradient(#464646,#2a2a2a 60%,#202020)"></div>
<div style="left:0px;top:1101px;width:44px;height:60px;background:linear-gradient(#a9a9a9,#8a8a8a 40%,#5c5c5c);border-radius:4px"></div>
<div style="left:15px;top:1102px;width:15px;height:15px;border-radius:50%;background:radial-gradient(circle at 50% 40%,#8a8a8a,#6a6a6a 60%,#9a9a9a)"></div>
<div style="left:18px;top:1106px;width:0;height:0;border-left:4.5px solid transparent;border-right:4.5px solid transparent;border-bottom:5px solid #222"></div>
<div style="left:5px;top:1126px;width:35px;height:30px;background:#ffff00;border-radius:3px;box-shadow:inset 1px 1px 0 #cccc00"></div>
<div style="left:50px;top:1101px;width:148px;height:60px;background:linear-gradient(#a9a9a9,#8a8a8a 40%,#5c5c5c);border-radius:4px"></div>
<div style="left:56px;top:1106px;width:137px;height:35px;background:rgb(192, 191, 160);border-radius:4px;box-shadow:inset 1px 1px 1px rgba(0,0,0,.25)"></div>
<div class="t" style="left:113.89px;top:1147.08px;font-size:11.48px;line-height:11.48px;color:#2a2a2a;font-weight:bold;transform:scaleX(0.8800);">20%</div>
<div style="left:200px;top:1101px;width:148px;height:60px;background:linear-gradient(#a9a9a9,#8a8a8a 40%,#5c5c5c);border-radius:4px"></div>
<div style="left:206px;top:1106px;width:137px;height:35px;background:rgb(192, 190, 136);border-radius:4px;box-shadow:inset 1px 1px 1px rgba(0,0,0,.25)"></div>
<div class="t" style="left:263.89px;top:1147.08px;font-size:11.48px;line-height:11.48px;color:#2a2a2a;font-weight:bold;transform:scaleX(0.8800);">40%</div>
<div style="left:350px;top:1101px;width:148px;height:60px;background:linear-gradient(#a9a9a9,#8a8a8a 40%,#5c5c5c);border-radius:4px"></div>
<div style="left:356px;top:1106px;width:137px;height:35px;background:rgb(193, 191, 110);border-radius:4px;box-shadow:inset 1px 1px 1px rgba(0,0,0,.25)"></div>
<div class="t" style="left:413.89px;top:1147.08px;font-size:11.48px;line-height:11.48px;color:#2a2a2a;font-weight:bold;transform:scaleX(0.8800);">60%</div>
<div style="left:500px;top:1101px;width:148px;height:60px;background:linear-gradient(#a9a9a9,#8a8a8a 40%,#5c5c5c);border-radius:4px"></div>
<div style="left:506px;top:1106px;width:137px;height:35px;background:rgb(191, 191, 74);border-radius:4px;box-shadow:inset 1px 1px 1px rgba(0,0,0,.25)"></div>
<div class="t" style="left:563.89px;top:1147.08px;font-size:11.48px;line-height:11.48px;color:#2a2a2a;font-weight:bold;transform:scaleX(0.8800);">80%</div>
<div style="left:649px;top:1101px;width:148px;height:60px;background:linear-gradient(#1c1c1c,#2a2a2a 40%,#343434);border-radius:4px"></div>
<div style="left:654px;top:1106px;width:138px;height:35px;background:rgb(192, 192, 0);border-radius:4px"></div>
<div class="t" style="left:710.08px;top:1147.08px;font-size:11.48px;line-height:11.48px;color:#fff;font-weight:bold;transform:scaleX(0.8800);">100%</div>
<div style="left:1601px;top:1101px;width:316px;height:60px;background:linear-gradient(#5a5a5a,#484848);border-radius:4px"></div>
<div style="left:1649px;top:1101px;width:223px;height:30px;background:linear-gradient(#8e8e8e,#7a7a7a 50%,#5e5e5e)"></div>
<div style="left:1872px;top:1101px;width:45px;height:30px;background:linear-gradient(#3a3a3a,#262626)"></div>
<div style="left:1695px;top:1101px;width:1px;height:30px;background:#4a4a4a"></div>
<div style="left:1740px;top:1101px;width:1px;height:30px;background:#4a4a4a"></div>
<div style="left:1784px;top:1101px;width:1px;height:30px;background:#4a4a4a"></div>
<div style="left:1828px;top:1101px;width:1px;height:30px;background:#4a4a4a"></div>
<div style="left:1663px;top:1110px;width:18px;height:18px;border-radius:50%;background:radial-gradient(circle at 50% 35%,#9c9c9c,#707070 70%)"></div>
<div style="left:1708px;top:1110px;width:18px;height:18px;border-radius:50%;background:radial-gradient(circle at 50% 35%,#9c9c9c,#707070 70%)"></div>
<div style="left:1752px;top:1110px;width:18px;height:18px;border-radius:50%;background:radial-gradient(circle at 50% 35%,#9c9c9c,#707070 70%)"></div>
<div style="left:1797px;top:1110px;width:18px;height:18px;border-radius:50%;background:radial-gradient(circle at 50% 35%,#9c9c9c,#707070 70%)"></div>
<div style="left:1841px;top:1110px;width:18px;height:18px;border-radius:50%;background:radial-gradient(circle at 50% 35%,#9c9c9c,#707070 70%)"></div>
<div style="left:1601px;top:1101px;width:47px;height:60px;background:linear-gradient(#888,#6a6a6a 60%,#5a5a5a);border-radius:4px"></div>
<div style="left:1609px;top:1125px;width:30px;height:30px;box-sizing:border-box;border:3px solid #1e1e1e;border-radius:5px;background:#8c8c8c"></div>
<div style="left:1617px;top:1135px;width:14px;height:12px;background:#000"></div>
<div style="left:1649px;top:1131px;width:268px;height:30px;background:linear-gradient(#b8b8b8,#a0a0a0 50%,#848484);border-radius:5px"></div>
<div style="left:1783px;top:1131px;width:1px;height:30px;background:#444"></div>
<div style="left:1670px;top:1136px;width:19px;height:19px;border-radius:50%;background:radial-gradient(circle at 50% 30%,#c4c4c4,#8e8e8e 75%,#7a7a7a)"></div>
<div class="t" style="left:1673.40px;top:1137.50px;font-size:18.90px;line-height:18.90px;color:#2a2a2a;transform:scaleX(1.1419);">«</div>
<div style="left:1880px;top:1136px;width:19px;height:19px;border-radius:50%;background:radial-gradient(circle at 50% 30%,#c4c4c4,#8e8e8e 75%,#7a7a7a)"></div>
<div class="t" style="left:1883.00px;top:1137.50px;font-size:18.90px;line-height:18.90px;color:#2a2a2a;transform:scaleX(1.1419);">»</div>
<div class="t" style="left:1705.00px;top:1136.29px;font-size:21.80px;line-height:21.80px;color:#262626;transform:scaleX(1.0522);">Back</div>
<div class="t" style="left:1811.10px;top:1136.29px;font-size:21.80px;line-height:21.80px;color:#262626;transform:scaleX(1.1376);">Next</div>
<svg style="position:absolute;left:1530px;top:1070px;overflow:visible" width="390" height="93">
<g fill="none" stroke-linejoin="miter" stroke-linecap="butt">
<path d="M11.5,13.3 L57.6,22.6 L62,52.3 L22,55 M11.5,13.3 L13.3,60.2 L43.4,76.2 L98.3,59.3 L66,54" stroke="#c8c8c8" stroke-opacity=".7" stroke-width="6.5"/>
<path d="M11.5,13.3 L57.6,22.6 L62,52.3 L22,55 M11.5,13.3 L13.3,60.2 L43.4,76.2 L98.3,59.3 L66,54" stroke="#85262c" stroke-opacity=".92" stroke-width="3.8"/>
</g>
<path d="M24.4,29.7 C27,26.5 30,25.2 32.5,25.7 L41.6,35.4 C48,24 57,15 67.3,10.2 L68.6,11.5 C63,18 59,24 56.7,29.2 L40.5,49.2 L37.2,49.2 C34,43 31.5,37.5 29.5,34.8 C28,32.5 26,31 24.4,29.7 Z" fill="#353535" stroke="#c8c8c8" stroke-opacity=".8" stroke-width="1.4"/>
<g font-family="Liberation Sans" font-weight="bold" font-size="34.5" lengthAdjust="spacingAndGlyphs">
<text x="69.5" y="49.4" textLength="193" fill="none" stroke="#d0d0d0" stroke-opacity=".7" stroke-width="4">NOTEBOOK</text>
<text x="69.5" y="49.4" textLength="193" fill="#952a34" stroke="#952a34" stroke-width="1.6" opacity=".72">NOTEBOOK</text>
<text x="264.5" y="49.4" textLength="115" font-weight="normal" fill="none" stroke="#d8d8d8" stroke-opacity=".75" stroke-width="3.6">CHECK</text>
<text x="264.5" y="49.4" textLength="115" font-weight="normal" fill="#262626" stroke="#262626" stroke-width="1.2" opacity=".85">CHECK</text>
</g>
</svg></body></html>
